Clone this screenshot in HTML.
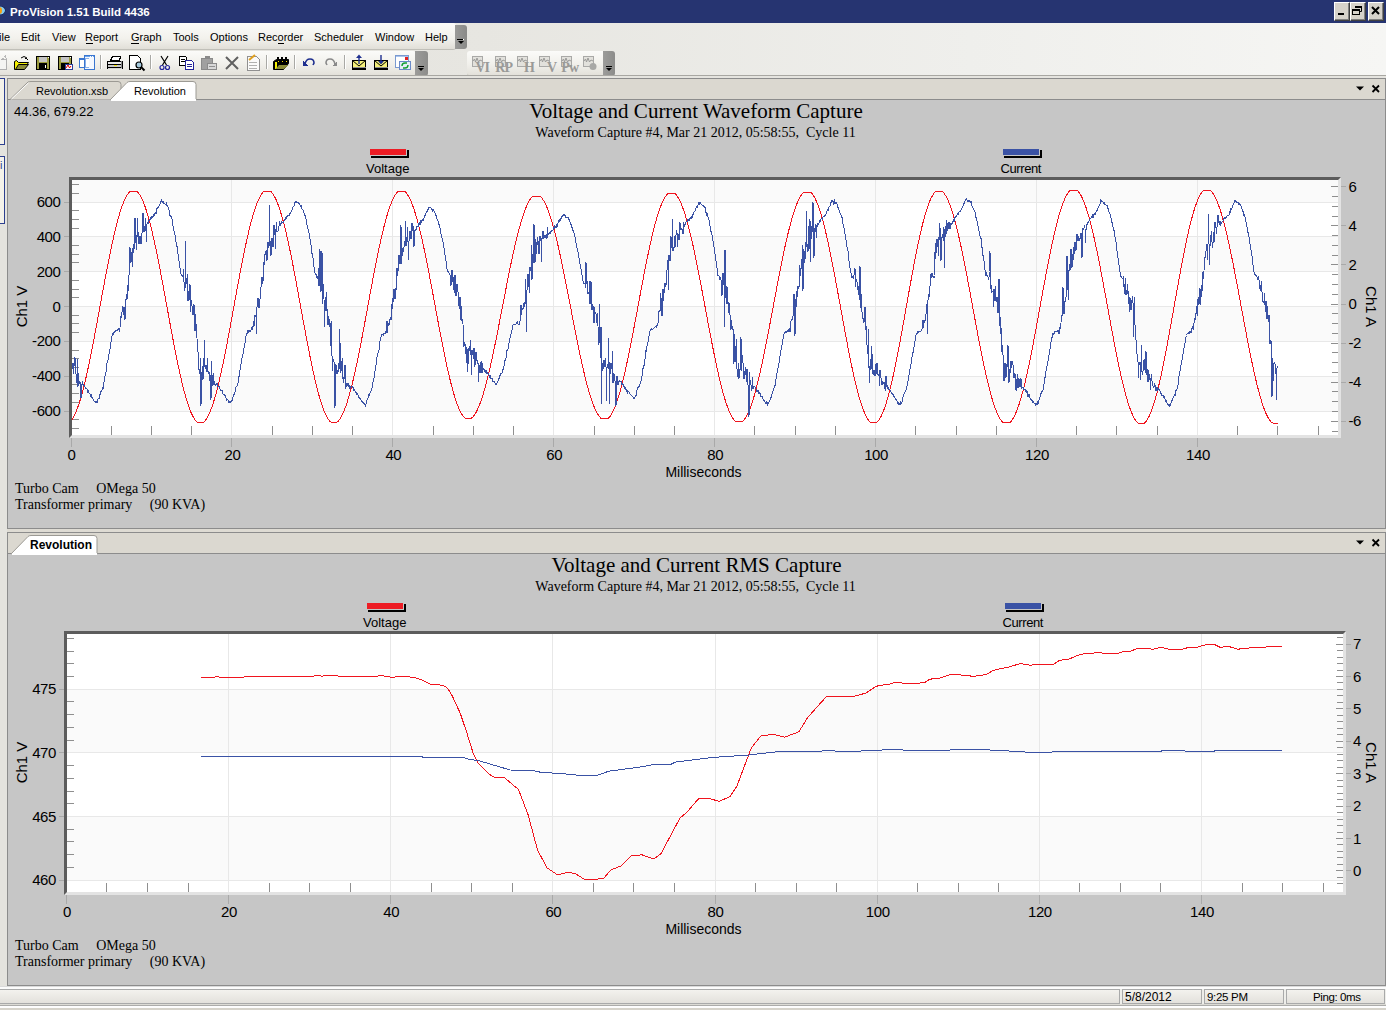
<!DOCTYPE html><html><head><meta charset="utf-8"><style>
*{margin:0;padding:0;box-sizing:border-box}
html,body{width:1386px;height:1010px;overflow:hidden;background:#e4e3de;font-family:'Liberation Sans',sans-serif;}
.abs{position:absolute}
.t{position:absolute;white-space:pre;line-height:1}
</style></head><body><div class="abs" style="left:0px;top:0px;width:1386px;height:23px;background:#263471"></div>
<svg class="abs" style="left:0;top:0" width="10" height="23"><ellipse cx="0" cy="10.5" rx="5.5" ry="4.6" fill="#0e1a50"/><ellipse cx="0" cy="10.5" rx="5" ry="4" fill="#86ccf0"/><ellipse cx="0" cy="10.5" rx="2" ry="3.2" fill="#f5a010"/></svg>
<div class="t" style="left:10px;top:6.5px;font-size:11.5px;font-weight:bold;color:#fff;">ProVision 1.51 Build 4436</div>
<div class="abs" style="left:1334px;top:2px;width:16px;height:19px;background:#d6d2ca;border-top:1px solid #fff;border-left:1px solid #fff;border-right:1px solid #404040;border-bottom:1px solid #404040;box-shadow:inset -1px -1px 0 #808080"></div>
<svg class="abs" style="left:1334px;top:2px" width="16" height="19"><rect x="4" y="11" width="6" height="2" fill="#000"/></svg>
<div class="abs" style="left:1350px;top:2px;width:16px;height:19px;background:#d6d2ca;border-top:1px solid #fff;border-left:1px solid #fff;border-right:1px solid #404040;border-bottom:1px solid #404040;box-shadow:inset -1px -1px 0 #808080"></div>
<svg class="abs" style="left:1350px;top:2px" width="16" height="19"><path d="M5.5 4.5 H11.5 V9.5 H9.5" fill="none" stroke="#000" stroke-width="1"/><rect x="5" y="4" width="7" height="2" fill="#000"/><rect x="2.5" y="7.5" width="7" height="5" fill="#d6d2ca" stroke="#000" stroke-width="1"/><rect x="2" y="7" width="8" height="2" fill="#000"/></svg>
<div class="abs" style="left:1368px;top:2px;width:16px;height:19px;background:#d6d2ca;border-top:1px solid #fff;border-left:1px solid #fff;border-right:1px solid #404040;border-bottom:1px solid #404040;box-shadow:inset -1px -1px 0 #808080"></div>
<svg class="abs" style="left:1368px;top:2px" width="16" height="19"><path d="M4 5 L11 12 M11 5 L4 12" stroke="#000" stroke-width="2"/></svg>
<div class="abs" style="left:0;top:23px;width:1386px;height:53px;background:linear-gradient(90deg,#e2e1db 0%,#e7e6e1 35%,#efefec 70%,#f6f6f4 100%)"></div>
<div class="abs" style="left:-4px;top:23px;width:460px;height:27px;background:linear-gradient(#fbfbf9,#f2f1ec 60%,#e1dfd8);border-radius:0 3px 3px 0;border-bottom:1px solid #c0bfb8"></div>
<div class="abs" style="left:455px;top:25px;width:12px;height:24px;background:linear-gradient(90deg,#9a9a98,#8a8a88);border-radius:0 3px 3px 0"></div>
<svg class="abs" style="left:455px;top:25px" width="12" height="24"><rect x="3" y="14" width="6" height="1" fill="#fff"/><path d="M3 16 L9 16 L6 19Z" fill="#000"/><rect x="2" y="14" width="6" height="1" fill="#000"/></svg>
<div class="t" style="left:-1px;top:32px;font-size:11px;color:#000">ile</div>
<div class="t" style="left:21px;top:32px;font-size:11px;color:#000">Edit</div>
<div class="t" style="left:52px;top:32px;font-size:11px;color:#000">View</div>
<div class="t" style="left:85px;top:32px;font-size:11px;color:#000">Report</div>
<div class="t" style="left:131px;top:32px;font-size:11px;color:#000">Graph</div>
<div class="t" style="left:173px;top:32px;font-size:11px;color:#000">Tools</div>
<div class="t" style="left:210px;top:32px;font-size:11px;color:#000">Options</div>
<div class="t" style="left:258px;top:32px;font-size:11px;color:#000">Recorder</div>
<div class="t" style="left:314px;top:32px;font-size:11px;color:#000">Scheduler</div>
<div class="t" style="left:375px;top:32px;font-size:11px;color:#000">Window</div>
<div class="t" style="left:425px;top:32px;font-size:11px;color:#000">Help</div>
<div class="abs" style="left:86px;top:43px;width:7px;height:1px;background:#000"></div>
<div class="abs" style="left:131px;top:43px;width:8px;height:1px;background:#000"></div>
<div class="abs" style="left:278px;top:43px;width:6px;height:1px;background:#000"></div>
<div class="abs" style="left:-4px;top:51px;width:420px;height:25px;background:linear-gradient(#fbfbf9,#f1f0eb 55%,#e3e1da);border-radius:0 3px 3px 0;border-bottom:1px solid #c4c3bc"></div>
<div class="abs" style="left:415px;top:51px;width:13px;height:25px;background:linear-gradient(90deg,#9c9c9a,#8c8c8a);border-radius:0 3px 3px 0"></div>
<svg class="abs" style="left:415px;top:51px" width="13" height="25"><rect x="3" y="15" width="6" height="1" fill="#000"/><path d="M3 17 L9 17 L6 20Z" fill="#000"/></svg>
<div class="abs" style="left:467px;top:51px;width:140px;height:25px;background:linear-gradient(#fbfbf9,#f1f0eb 55%,#e3e1da);border-radius:3px 0 0 3px;border-bottom:1px solid #c4c3bc"></div>
<div class="abs" style="left:603px;top:51px;width:12px;height:25px;background:linear-gradient(90deg,#9c9c9a,#8c8c8a);border-radius:0 3px 3px 0"></div>
<svg class="abs" style="left:603px;top:51px" width="12" height="25"><rect x="3" y="15" width="6" height="1" fill="#000"/><path d="M3 17 L9 17 L6 20Z" fill="#000"/></svg>
<svg class="abs" style="left:0;top:48px" width="620" height="28" shape-rendering="crispEdges">
<path d="M0.5 11.5 L6.5 11.5 L6.5 21.5 L0 21.5" fill="#f4f4f2" stroke="#b0b0b0" stroke-width="1"/>
<path d="M4 8 L7 11 M2 10 L6 12 M5 7 L6 10" stroke="#b8b8b8" stroke-width="1"/>
<path d="M14.5 13.5 L14.5 21.5 L23.5 21.5 L28.5 14.5 L18.5 14.5 L16.5 12.5Z" fill="#f5f000" stroke="#000" stroke-width="1" shape-rendering="auto"/>
<path d="M15.5 21.5 L18.5 16.5 L28.5 16.5 L24.5 21.5Z" fill="#8c8c3a" stroke="#000" stroke-width="1" shape-rendering="auto"/>
<path d="M21 10 Q24 7 27 10" fill="none" stroke="#000" stroke-width="1" shape-rendering="auto"/><path d="M26 9 L28 12 L25 11Z" fill="#000"/>
<rect x="36" y="8" width="14" height="14" fill="#000"/>
<rect x="37" y="9" width="12" height="12" fill="#9c9c40"/>
<rect x="39" y="9" width="8" height="5" fill="#c4c4c4"/>
<rect x="39" y="15" width="8" height="6" fill="#000"/>
<rect x="45" y="17" width="1" height="3" fill="#fff"/>
<rect x="48" y="9" width="1" height="1" fill="#fff"/>
<rect x="58" y="8" width="14" height="14" fill="#000"/>
<rect x="59" y="9" width="12" height="12" fill="#9c9c40"/>
<rect x="61" y="9" width="8" height="5" fill="#c4c4c4"/>
<rect x="61" y="15" width="8" height="6" fill="#000"/>
<rect x="70" y="9" width="1" height="1" fill="#fff"/>
<rect x="65" y="16" width="8" height="6" fill="#2a3f9a"/>
<rect x="66" y="17" width="6" height="4" fill="#fff"/>
<path d="M66 20 L68 17 L69.5 20 L71 18" stroke="#e00" stroke-width="1" fill="none" shape-rendering="auto"/>
<rect x="79" y="10" width="7" height="10" fill="#3a76d0"/>
<rect x="80" y="12" width="5" height="7" fill="#fff"/>
<rect x="84" y="7" width="11" height="15" fill="#3a76d0"/>
<rect x="85" y="9" width="9" height="12" fill="#f4f8ff"/>
<rect x="85" y="8" width="9" height="1" fill="#6aa4ec"/>
<rect x="92" y="8" width="1" height="1" fill="#fff"/>
<rect x="90" y="8" width="1" height="1" fill="#fff"/>
<rect x="85" y="10" width="4" height="10" fill="#8ab0e8"/>
<rect x="86" y="11" width="3" height="8" fill="#fff"/>
<rect x="100" y="7" width="1" height="14" fill="#a9a9a5"/>
<rect x="101" y="7" width="1" height="14" fill="#fff"/>
<path d="M110.5 12.5 L112.5 8.5 L120.5 8.5 L119.5 12.5Z" fill="#fff" stroke="#000"/>
<rect x="107" y="13" width="16" height="8" fill="#000"/>
<rect x="108" y="14" width="13" height="2" fill="#e8e8e8"/>
<rect x="108" y="17" width="13" height="2" fill="#c8c8c8"/>
<rect x="114" y="17" width="3" height="1" fill="#f0e000"/>
<rect x="108" y="20" width="14" height="1" fill="#d0d0d0"/>
<rect x="121" y="13" width="1" height="7" fill="#888"/>
<path d="M129.5 7.5 L137.5 7.5 L140.5 10.5 L140.5 21.5 L129.5 21.5Z" fill="#fff" stroke="#000"/>
<circle cx="139" cy="17" r="3" fill="#a8cce0" stroke="#000" stroke-width="1.2" shape-rendering="auto"/><path d="M141 19 L144.5 22.5" stroke="#000" stroke-width="2" shape-rendering="auto"/>
<rect x="150" y="7" width="1" height="14" fill="#a9a9a5"/>
<rect x="151" y="7" width="1" height="14" fill="#fff"/>
<path d="M161 8 L166.5 17 M168 8 L162.5 17" stroke="#000" stroke-width="1.2" shape-rendering="auto"/>
<circle cx="162" cy="19.5" r="2" fill="none" stroke="#22229a" stroke-width="1.2" shape-rendering="auto"/><circle cx="167.5" cy="19.5" r="2" fill="none" stroke="#22229a" stroke-width="1.2" shape-rendering="auto"/>
<path d="M179.5 8.5 L185.5 8.5 L186.5 9.5 L186.5 17.5 L179.5 17.5Z" fill="#fff" stroke="#000"/>
<rect x="181" y="11" width="4" height="1" fill="#000"/>
<rect x="181" y="13" width="4" height="1" fill="#000"/>
<path d="M185.5 12.5 L191.5 12.5 L193.5 14.5 L193.5 21.5 L185.5 21.5Z" fill="#fff" stroke="#22229a"/>
<rect x="187" y="16" width="5" height="1" fill="#22229a"/>
<rect x="187" y="18" width="5" height="1" fill="#22229a"/>
<path d="M201.5 10.5 L212.5 10.5 L212.5 21.5 L201.5 21.5Z" fill="#a0a0a0" stroke="#8a8a8a"/>
<rect x="205" y="8" width="5" height="3" fill="#8a8a8a"/>
<path d="M207.5 15.5 L216.5 15.5 L216.5 21.5 L207.5 21.5Z" fill="#d8d8d8" stroke="#8a8a8a"/>
<rect x="209" y="18" width="6" height="1" fill="#909090"/>
<path d="M226 9 L238 21 M238 9 L226 21" stroke="#606060" stroke-width="2" shape-rendering="auto"/>
<path d="M247.5 8.5 L256.5 8.5 L259.5 11.5 L259.5 22.5 L247.5 22.5Z" fill="#fafafa" stroke="#909090"/>
<rect x="249" y="14" width="8" height="1" fill="#b0b0b0"/>
<rect x="249" y="17" width="8" height="1" fill="#b0b0b0"/>
<rect x="249" y="20" width="8" height="1" fill="#b0b0b0"/>
<path d="M249 12 L255 7" stroke="#e0a020" stroke-width="2" shape-rendering="auto"/>
<rect x="266" y="7" width="1" height="14" fill="#a9a9a5"/>
<rect x="267" y="7" width="1" height="14" fill="#fff"/>
<path d="M273.5 13.5 L273.5 21.5 L283.5 21.5 L288.5 15.5 L288.5 11.5 L276.5 11.5Z" fill="#000" stroke="#000" shape-rendering="auto"/>
<path d="M274.5 13.5 L276.5 13.5 L276.5 20.5 L274.5 20.5Z" fill="#f5f000"/>
<path d="M275.5 21 L279 17 L288.5 17 L284 21Z" fill="#8c8c3a" shape-rendering="auto"/>
<rect x="277" y="9" width="2" height="3" fill="#000"/>
<rect x="281" y="9" width="2" height="3" fill="#000"/>
<rect x="285" y="9" width="2" height="3" fill="#000"/>
<rect x="278" y="13" width="1" height="1" fill="#ffe000"/>
<rect x="282" y="13" width="1" height="1" fill="#ffe000"/>
<rect x="286" y="13" width="1" height="1" fill="#ffe000"/>
<rect x="294" y="7" width="1" height="14" fill="#a9a9a5"/>
<rect x="295" y="7" width="1" height="14" fill="#fff"/>
<path d="M305 16 Q306 11 310 11 Q314 11 314 15 L313 17" fill="none" stroke="#1f2f8f" stroke-width="1.6" shape-rendering="auto"/><path d="M303 13 L303 18 L308 18Z" fill="#1f2f8f"/>
<path d="M335 16 Q334 11 330 11 Q326 11 326 15 L327 17" fill="none" stroke="#8a8a8a" stroke-width="1.6" shape-rendering="auto"/><path d="M337 13 L337 18 L332 18Z" fill="#8a8a8a"/>
<rect x="344" y="7" width="1" height="14" fill="#a9a9a5"/>
<rect x="345" y="7" width="1" height="14" fill="#fff"/>
<path d="M352.5 12.5 L365.5 12.5 L365.5 21.5 L352.5 21.5Z" fill="#f5f07a" stroke="#000"/>
<path d="M352.5 12.5 L359 18 L365.5 12.5" fill="none" stroke="#000" shape-rendering="auto"/>
<rect x="353" y="20" width="13" height="2" fill="#000"/>
<rect x="353" y="19" width="13" height="1" fill="#909090"/>
<path d="M359 16 L359 8" stroke="#1f2f8f" stroke-width="1.4" shape-rendering="auto"/><path d="M356 10 L359 6.5 L362 10Z" fill="#1f2f8f" shape-rendering="auto"/>
<path d="M374.5 12.5 L387.5 12.5 L387.5 21.5 L374.5 21.5Z" fill="#f5f07a" stroke="#000"/>
<path d="M374.5 12.5 L381 18 L387.5 12.5" fill="none" stroke="#000" shape-rendering="auto"/>
<rect x="375" y="20" width="13" height="2" fill="#000"/>
<rect x="375" y="19" width="13" height="1" fill="#909090"/>
<path d="M381 7 L381 15" stroke="#1f2f8f" stroke-width="1.4" shape-rendering="auto"/><path d="M378 13 L381 16.5 L384 13Z" fill="#1f2f8f" shape-rendering="auto"/>
<rect x="395" y="7" width="14" height="13" fill="#7a9ad0"/>
<rect x="396" y="9" width="12" height="10" fill="#fff"/>
<rect x="396" y="8" width="12" height="1" fill="#aac4ec"/>
<rect x="405" y="9" width="3" height="3" fill="#e02020"/>
<rect x="399" y="13" width="12" height="9" fill="#6a8ac8"/>
<rect x="400" y="14" width="10" height="7" fill="#e6eef8"/>
<path d="M402 18 Q402 15 405 15 L407 15 M408 17 Q408 20 405 20 L403 20" fill="none" stroke="#12a030" stroke-width="1.4" shape-rendering="auto"/>
<rect x="472" y="8" width="11" height="11" fill="#a9a9a7"/>
<rect x="473" y="9" width="9" height="9" fill="#e2e1dc"/>
<path d="M473 13 L474.5 11 L475.5 14 L477 10 L478.5 14 L480 12 L482 13" fill="none" stroke="#9a9a98" stroke-width="1" shape-rendering="auto"/>
<text x="489" y="23.5" text-anchor="end" font-family="Liberation Serif, serif" font-weight="bold" font-size="14" letter-spacing="-1" fill="#9a9a98" shape-rendering="auto">VI</text>
<rect x="495" y="8" width="11" height="11" fill="#a9a9a7"/>
<rect x="496" y="9" width="9" height="9" fill="#e2e1dc"/>
<path d="M496 13 L497.5 11 L498.5 14 L500 10 L501.5 14 L503 12 L505 13" fill="none" stroke="#9a9a98" stroke-width="1" shape-rendering="auto"/>
<text x="512" y="23.5" text-anchor="end" font-family="Liberation Serif, serif" font-weight="bold" font-size="14" letter-spacing="-1" fill="#9a9a98" shape-rendering="auto">RP</text>
<rect x="517" y="8" width="11" height="11" fill="#a9a9a7"/>
<rect x="518" y="9" width="9" height="9" fill="#e2e1dc"/>
<path d="M518 13 L519.5 11 L520.5 14 L522 10 L523.5 14 L525 12 L527 13" fill="none" stroke="#9a9a98" stroke-width="1" shape-rendering="auto"/>
<text x="534" y="23.5" text-anchor="end" font-family="Liberation Serif, serif" font-weight="bold" font-size="14" letter-spacing="-1" fill="#9a9a98" shape-rendering="auto">H</text>
<rect x="539" y="8" width="11" height="11" fill="#a9a9a7"/>
<rect x="540" y="9" width="9" height="9" fill="#e2e1dc"/>
<path d="M540 13 L541.5 11 L542.5 14 L544 10 L545.5 14 L547 12 L549 13" fill="none" stroke="#9a9a98" stroke-width="1" shape-rendering="auto"/>
<text x="556" y="23.5" text-anchor="end" font-family="Liberation Serif, serif" font-weight="bold" font-size="14" letter-spacing="-1" fill="#9a9a98" shape-rendering="auto">V</text>
<rect x="561" y="8" width="11" height="11" fill="#a9a9a7"/>
<rect x="562" y="9" width="9" height="9" fill="#e2e1dc"/>
<path d="M562 13 L563.5 11 L564.5 14 L566 10 L567.5 14 L569 12 L571 13" fill="none" stroke="#9a9a98" stroke-width="1" shape-rendering="auto"/>
<text x="578" y="23.5" text-anchor="end" font-family="Liberation Serif, serif" font-weight="bold" font-size="14" letter-spacing="-1" fill="#9a9a98" shape-rendering="auto">Pw</text>
<rect x="583" y="8" width="11" height="11" fill="#a9a9a7"/>
<rect x="584" y="9" width="9" height="9" fill="#e2e1dc"/>
<path d="M584 13 L585.5 11 L586.5 14 L588 10 L589.5 14 L591 12 L593 13" fill="none" stroke="#9a9a98" stroke-width="1" shape-rendering="auto"/>
<circle cx="593" cy="18.5" r="3.5" fill="#a8a8a6" shape-rendering="auto"/>
</svg>
<div class="abs" style="left:0px;top:75px;width:1386px;height:1px;background:#a8a7a2"></div>
<div class="abs" style="left:0px;top:76px;width:1386px;height:2px;background:#e5e4df"></div>
<div class="abs" style="left:0px;top:78px;width:7px;height:910px;background:#e4e3de"></div>
<div class="abs" style="left:-10px;top:78px;width:15px;height:67px;border:1px solid #2d3f8f;background:#f4f2ea"></div>
<div class="abs" style="left:-10px;top:156px;width:15px;height:68px;border:1px solid #2d3f8f;background:#f4f2ea"></div>
<div class="t" style="left:0px;top:160px;font-size:11px;color:#2d3f8f">i</div>
<div class="abs" style="left:7px;top:78px;width:1379px;height:451px;border:1px solid #8c8c8c;background:#c6c6c6"></div>
<div class="abs" style="left:8px;top:79px;width:1377px;height:21px;background:#dbd8d0;border-bottom:1px solid #8c8c8c"></div>
<svg class="abs" style="left:8px;top:79px" width="200" height="22"><path d="M2 20.5 L20 3 Q21 2.5 23 2.5 L110 2.5 Q113 2.5 113 5.5 L113 20.5" fill="#dbd8d0" stroke="#9c9a94" stroke-width="1"/><path d="M3.5 20 L20.5 3.8" stroke="#fff" stroke-width="1"/><path d="M102 21 L119 3.5 Q120 2.5 122 2.5 L185 2.5 Q188 2.5 188 5.5 L188 21" fill="#fff" stroke="#9c9a94" stroke-width="1"/><rect x="103" y="20" width="85" height="2" fill="#fff"/></svg>
<svg class="abs" style="left:1354px;top:84px" width="30" height="12"><path d="M2 2.5 L10 2.5 L6 6.5Z" fill="#000"/><path d="M18.5 1.5 L25 8 M25 1.5 L18.5 8" stroke="#000" stroke-width="1.8"/></svg>
<div class="t" style="left:36px;top:86px;font-size:11px;color:#000">Revolution.xsb</div>
<div class="t" style="left:134px;top:86px;font-size:11px;color:#000">Revolution</div>
<div class="abs" style="left:7px;top:529px;width:1379px;height:3px;background:#dedbd3"></div>
<div class="abs" style="left:7px;top:532px;width:1379px;height:454px;border:1px solid #8c8c8c;background:#c6c6c6"></div>
<div class="abs" style="left:8px;top:533px;width:1377px;height:21px;background:#dbd8d0;border-bottom:1px solid #8c8c8c"></div>
<svg class="abs" style="left:8px;top:533px" width="200" height="22"><path d="M3 21 L20 3.5 Q21 2.5 23 2.5 L86 2.5 Q89 2.5 89 5.5 L89 21" fill="#fff" stroke="#9c9a94" stroke-width="1"/><rect x="4" y="20" width="85" height="2" fill="#fff"/></svg>
<svg class="abs" style="left:1354px;top:538px" width="30" height="12"><path d="M2 2.5 L10 2.5 L6 6.5Z" fill="#000"/><path d="M18.5 1.5 L25 8 M25 1.5 L18.5 8" stroke="#000" stroke-width="1.8"/></svg>
<div class="t" style="left:30px;top:539px;font-size:12px;font-weight:bold;color:#000">Revolution</div>
<div class="abs" style="left:0px;top:986px;width:1386px;height:24px;background:#eeeeea"></div>
<div class="abs" style="left:0px;top:986px;width:1386px;height:1px;background:#dadada"></div>
<div class="abs" style="left:0px;top:987px;width:1386px;height:2px;background:#fcfcfc"></div>
<div class="abs" style="left:0px;top:1004px;width:1386px;height:1px;background:#dcdbd5"></div>
<div class="abs" style="left:0px;top:1005px;width:1386px;height:1px;background:#acacaa"></div>
<div class="abs" style="left:0px;top:1006px;width:1386px;height:2px;background:#fdfdfd"></div>
<div class="abs" style="left:0px;top:1008px;width:1386px;height:2px;background:#d6d3ca"></div>
<div class="abs" style="left:-2px;top:989px;width:1122px;height:15px;border:1px solid #a9aaaa;background:linear-gradient(#f3f2ee,#e3e1dc)"></div>
<div class="abs" style="left:1122px;top:989px;width:80px;height:15px;border:1px solid #a9aaaa;background:linear-gradient(#f3f2ee,#e3e1dc)"></div>
<div class="abs" style="left:1204px;top:989px;width:80px;height:15px;border:1px solid #a9aaaa;background:linear-gradient(#f3f2ee,#e3e1dc)"></div>
<div class="abs" style="left:1286px;top:989px;width:99px;height:15px;border:1px solid #a9aaaa;background:linear-gradient(#f3f2ee,#e3e1dc)"></div>
<div class="t" style="left:1125px;top:991px;font-size:12px;color:#000">5/8/2012</div>
<div class="t" style="left:1207px;top:991.5px;font-size:11.5px;color:#000;letter-spacing:-0.3px">9:25 PM</div>
<div class="t" style="left:1313px;top:991.5px;font-size:11.5px;color:#000;letter-spacing:-0.4px">Ping: 0ms</div>
<svg class="abs" style="left:0;top:0;overflow:visible" width="1386" height="1010">
<text x="14" y="116" font-family="'Liberation Sans', sans-serif" font-size="13" text-anchor="start" >44.36, 679.22</text>
<text x="696" y="118" font-family="'Liberation Serif', serif" font-size="21" text-anchor="middle" >Voltage and Current Waveform Capture</text>
<text x="695.5" y="137" font-family="'Liberation Serif', serif" font-size="14" text-anchor="middle" >Waveform Capture #4, Mar 21 2012, 05:58:55,&#160; Cycle 11</text>
<rect x="371" y="156" width="37" height="2" fill="#000"/>
<rect x="407" y="150" width="2" height="8" fill="#000"/>
<rect x="370" y="149" width="36" height="6" fill="#ed1c24"/>
<text x="366" y="173" font-family="'Liberation Sans', sans-serif" font-size="13" text-anchor="start" >Voltage</text>
<rect x="1004" y="156" width="37" height="2" fill="#000"/>
<rect x="1040" y="150" width="2" height="8" fill="#000"/>
<rect x="1003" y="149" width="36" height="6" fill="#3a52a5"/>
<text x="1000.5" y="173" font-family="'Liberation Sans', sans-serif" font-size="13" text-anchor="start" letter-spacing="-0.4">Current</text>
<text x="15" y="493" font-family="'Liberation Serif', serif" font-size="14" text-anchor="start" >Turbo Cam&#160;&#160;&#160;&#160; OMega 50</text>
<text x="15" y="509" font-family="'Liberation Serif', serif" font-size="14" text-anchor="start" >Transformer primary&#160;&#160;&#160;&#160; (90 KVA)</text>
<rect x="72" y="180" width="1266" height="255" fill="#ffffff"/>
<rect x="72" y="180" width="1266" height="22" fill="#fafafa"/>
<rect x="72" y="237" width="1266" height="35" fill="#fafafa"/>
<rect x="72" y="306" width="1266" height="35" fill="#fafafa"/>
<rect x="72" y="376" width="1266" height="35" fill="#fafafa"/>
<rect x="231" y="180" width="1" height="255" fill="#e8e8e8"/>
<rect x="392" y="180" width="1" height="255" fill="#e8e8e8"/>
<rect x="553" y="180" width="1" height="255" fill="#e8e8e8"/>
<rect x="714" y="180" width="1" height="255" fill="#e8e8e8"/>
<rect x="875" y="180" width="1" height="255" fill="#e8e8e8"/>
<rect x="1036" y="180" width="1" height="255" fill="#e8e8e8"/>
<rect x="1197" y="180" width="1" height="255" fill="#e8e8e8"/>
<rect x="72" y="202" width="1266" height="1" fill="#e8e8e8"/>
<rect x="72" y="236" width="1266" height="1" fill="#e8e8e8"/>
<rect x="72" y="271" width="1266" height="1" fill="#e8e8e8"/>
<rect x="72" y="306" width="1266" height="1" fill="#e8e8e8"/>
<rect x="72" y="341" width="1266" height="1" fill="#e8e8e8"/>
<rect x="72" y="376" width="1266" height="1" fill="#e8e8e8"/>
<rect x="72" y="411" width="1266" height="1" fill="#e8e8e8"/>
<rect x="72" y="428" width="7" height="1" fill="#8f8f8f"/>
<rect x="72" y="419" width="7" height="1" fill="#8f8f8f"/>
<rect x="72" y="402" width="7" height="1" fill="#8f8f8f"/>
<rect x="72" y="393" width="7" height="1" fill="#8f8f8f"/>
<rect x="72" y="384" width="7" height="1" fill="#8f8f8f"/>
<rect x="72" y="367" width="7" height="1" fill="#8f8f8f"/>
<rect x="72" y="358" width="7" height="1" fill="#8f8f8f"/>
<rect x="72" y="350" width="7" height="1" fill="#8f8f8f"/>
<rect x="72" y="332" width="7" height="1" fill="#8f8f8f"/>
<rect x="72" y="323" width="7" height="1" fill="#8f8f8f"/>
<rect x="72" y="315" width="7" height="1" fill="#8f8f8f"/>
<rect x="72" y="297" width="7" height="1" fill="#8f8f8f"/>
<rect x="72" y="289" width="7" height="1" fill="#8f8f8f"/>
<rect x="72" y="280" width="7" height="1" fill="#8f8f8f"/>
<rect x="72" y="262" width="7" height="1" fill="#8f8f8f"/>
<rect x="72" y="254" width="7" height="1" fill="#8f8f8f"/>
<rect x="72" y="245" width="7" height="1" fill="#8f8f8f"/>
<rect x="72" y="228" width="7" height="1" fill="#8f8f8f"/>
<rect x="72" y="219" width="7" height="1" fill="#8f8f8f"/>
<rect x="72" y="210" width="7" height="1" fill="#8f8f8f"/>
<rect x="72" y="193" width="7" height="1" fill="#8f8f8f"/>
<rect x="72" y="184" width="7" height="1" fill="#8f8f8f"/>
<rect x="111" y="426" width="1" height="9" fill="#8f8f8f"/>
<rect x="151" y="426" width="1" height="9" fill="#8f8f8f"/>
<rect x="191" y="426" width="1" height="9" fill="#8f8f8f"/>
<rect x="272" y="426" width="1" height="9" fill="#8f8f8f"/>
<rect x="312" y="426" width="1" height="9" fill="#8f8f8f"/>
<rect x="352" y="426" width="1" height="9" fill="#8f8f8f"/>
<rect x="433" y="426" width="1" height="9" fill="#8f8f8f"/>
<rect x="473" y="426" width="1" height="9" fill="#8f8f8f"/>
<rect x="513" y="426" width="1" height="9" fill="#8f8f8f"/>
<rect x="594" y="426" width="1" height="9" fill="#8f8f8f"/>
<rect x="634" y="426" width="1" height="9" fill="#8f8f8f"/>
<rect x="674" y="426" width="1" height="9" fill="#8f8f8f"/>
<rect x="754" y="426" width="1" height="9" fill="#8f8f8f"/>
<rect x="795" y="426" width="1" height="9" fill="#8f8f8f"/>
<rect x="835" y="426" width="1" height="9" fill="#8f8f8f"/>
<rect x="915" y="426" width="1" height="9" fill="#8f8f8f"/>
<rect x="956" y="426" width="1" height="9" fill="#8f8f8f"/>
<rect x="996" y="426" width="1" height="9" fill="#8f8f8f"/>
<rect x="1076" y="426" width="1" height="9" fill="#8f8f8f"/>
<rect x="1116" y="426" width="1" height="9" fill="#8f8f8f"/>
<rect x="1157" y="426" width="1" height="9" fill="#8f8f8f"/>
<rect x="1237" y="426" width="1" height="9" fill="#8f8f8f"/>
<rect x="1277" y="426" width="1" height="9" fill="#8f8f8f"/>
<rect x="1318" y="426" width="1" height="9" fill="#8f8f8f"/>
<rect x="1332" y="431" width="6" height="1" fill="#8f8f8f"/>
<rect x="1331" y="421" width="7" height="1" fill="#8f8f8f"/>
<rect x="1332" y="411" width="6" height="1" fill="#8f8f8f"/>
<rect x="1332" y="401" width="6" height="1" fill="#8f8f8f"/>
<rect x="1332" y="391" width="6" height="1" fill="#8f8f8f"/>
<rect x="1331" y="382" width="7" height="1" fill="#8f8f8f"/>
<rect x="1332" y="372" width="6" height="1" fill="#8f8f8f"/>
<rect x="1332" y="362" width="6" height="1" fill="#8f8f8f"/>
<rect x="1332" y="352" width="6" height="1" fill="#8f8f8f"/>
<rect x="1331" y="343" width="7" height="1" fill="#8f8f8f"/>
<rect x="1332" y="333" width="6" height="1" fill="#8f8f8f"/>
<rect x="1332" y="323" width="6" height="1" fill="#8f8f8f"/>
<rect x="1332" y="313" width="6" height="1" fill="#8f8f8f"/>
<rect x="1331" y="304" width="7" height="1" fill="#8f8f8f"/>
<rect x="1332" y="294" width="6" height="1" fill="#8f8f8f"/>
<rect x="1332" y="284" width="6" height="1" fill="#8f8f8f"/>
<rect x="1332" y="274" width="6" height="1" fill="#8f8f8f"/>
<rect x="1331" y="264" width="7" height="1" fill="#8f8f8f"/>
<rect x="1332" y="255" width="6" height="1" fill="#8f8f8f"/>
<rect x="1332" y="245" width="6" height="1" fill="#8f8f8f"/>
<rect x="1332" y="235" width="6" height="1" fill="#8f8f8f"/>
<rect x="1331" y="225" width="7" height="1" fill="#8f8f8f"/>
<rect x="1332" y="216" width="6" height="1" fill="#8f8f8f"/>
<rect x="1332" y="206" width="6" height="1" fill="#8f8f8f"/>
<rect x="1332" y="196" width="6" height="1" fill="#8f8f8f"/>
<rect x="1331" y="186" width="7" height="1" fill="#8f8f8f"/>
<path d="M72 419.39 L72.5 418.66 L73 417.86 L73.5 416.99 L74 416.07 L74.5 415.09 L75 414.05 L75.5 412.95 L76 411.79 L76.5 410.57 L77 409.3 L77.5 407.97 L78 406.59 L78.5 405.15 L79 403.65 L79.5 402.11 L80 400.51 L80.5 398.86 L81 397.16 L81.5 395.41 L82 393.61 L82.5 391.76 L83 389.87 L83.5 387.93 L84 385.94 L84.5 383.92 L85 381.85 L85.5 379.74 L86 377.59 L86.5 375.4 L87 373.17 L87.5 370.91 L88 368.61 L88.5 366.27 L89 363.91 L89.5 361.51 L90 359.09 L90.5 356.63 L91 354.15 L91.5 351.64 L92 349.1 L92.5 346.55 L93 343.97 L93.5 341.37 L94 338.75 L94.5 336.11 L95 333.46 L95.5 330.8 L96 328.12 L96.5 325.42 L97 322.72 L97.5 320.01 L98 317.29 L98.5 314.57 L99 311.84 L99.5 309.11 L100 306.38 L100.5 303.64 L101 300.91 L101.5 298.19 L102 295.46 L102.5 292.75 L103 290.04 L103.5 287.34 L104 284.65 L104.5 281.97 L105 279.31 L105.5 276.66 L106 274.02 L106.5 271.41 L107 268.81 L107.5 266.24 L108 263.69 L108.5 261.16 L109 258.65 L109.5 256.18 L110 253.73 L110.5 251.31 L111 248.92 L111.5 246.56 L112 244.23 L112.5 241.94 L113 239.68 L113.5 237.46 L114 235.28 L114.5 233.14 L115 231.03 L115.5 228.97 L116 226.96 L116.5 224.98 L117 223.05 L117.5 221.17 L118 219.33 L118.5 217.54 L119 215.8 L119.5 214.11 L120 212.47 L120.5 210.88 L121 209.34 L121.5 207.86 L122 206.43 L122.5 205.06 L123 203.74 L123.5 202.48 L124 201.27 L124.5 200.13 L125 199.04 L125.5 198.01 L126 197.04 L126.5 196.13 L127 195.28 L127.5 194.49 L128 193.76 L128.5 193.1 L129 192.5 L129.5 191.96 L130 191.48 L130.5 191.3 L131 191.3 L131.5 191.3 L132 191.3 L132.5 191.3 L133 191.3 L133.5 191.3 L134 191.3 L134.5 191.3 L135 191.3 L135.5 191.3 L136 191.3 L136.5 191.3 L137 191.49 L137.5 191.97 L138 192.51 L138.5 193.12 L139 193.79 L139.5 194.52 L140 195.32 L140.5 196.17 L141 197.09 L141.5 198.06 L142 199.1 L142.5 200.19 L143 201.35 L143.5 202.56 L144 203.83 L144.5 205.16 L145 206.54 L145.5 207.98 L146 209.47 L146.5 211.02 L147 212.62 L147.5 214.27 L148 215.97 L148.5 217.72 L149 219.52 L149.5 221.37 L150 223.27 L150.5 225.21 L151 227.2 L151.5 229.23 L152 231.3 L152.5 233.42 L153 235.57 L153.5 237.77 L154 240 L154.5 242.27 L155 244.57 L155.5 246.91 L156 249.29 L156.5 251.69 L157 254.12 L157.5 256.59 L158 259.08 L158.5 261.6 L159 264.14 L159.5 266.7 L160 269.29 L160.5 271.9 L161 274.53 L161.5 277.17 L162 279.84 L162.5 282.51 L163 285.2 L163.5 287.9 L164 290.62 L164.5 293.34 L165 296.07 L165.5 298.8 L166 301.54 L166.5 304.28 L167 307.02 L167.5 309.77 L168 312.51 L168.5 315.25 L169 317.98 L169.5 320.71 L170 323.43 L170.5 326.14 L171 328.84 L171.5 331.52 L172 334.2 L172.5 336.86 L173 339.5 L173.5 342.12 L174 344.73 L174.5 347.31 L175 349.87 L175.5 352.41 L176 354.92 L176.5 357.41 L177 359.87 L177.5 362.29 L178 364.69 L178.5 367.06 L179 369.39 L179.5 371.69 L180 373.95 L180.5 376.18 L181 378.36 L181.5 380.51 L182 382.62 L182.5 384.68 L183 386.71 L183.5 388.68 L184 390.62 L184.5 392.5 L185 394.34 L185.5 396.13 L186 397.88 L186.5 399.57 L187 401.21 L187.5 402.8 L188 404.33 L188.5 405.81 L189 407.24 L189.5 408.61 L190 409.93 L190.5 411.19 L191 412.39 L191.5 413.53 L192 414.61 L192.5 415.64 L193 416.6 L193.5 417.51 L194 418.35 L194.5 419.13 L195 419.85 L195.5 420.51 L196 421.1 L196.5 421.63 L197 422.1 L197.5 422.2 L198 422.2 L198.5 422.2 L199 422.2 L199.5 422.2 L200 422.2 L200.5 422.2 L201 422.2 L201.5 422.2 L202 422.2 L202.5 422.2 L203 422.2 L203.5 422.2 L204 421.92 L204.5 421.43 L205 420.87 L205.5 420.25 L206 419.57 L206.5 418.82 L207 418.02 L207.5 417.15 L208 416.22 L208.5 415.23 L209 414.19 L209.5 413.08 L210 411.91 L210.5 410.69 L211 409.41 L211.5 408.07 L212 406.68 L212.5 405.23 L213 403.72 L213.5 402.17 L214 400.56 L214.5 398.9 L215 397.18 L215.5 395.42 L216 393.61 L216.5 391.75 L217 389.85 L217.5 387.9 L218 385.9 L218.5 383.86 L219 381.78 L219.5 379.66 L220 377.49 L220.5 375.29 L221 373.05 L221.5 370.77 L222 368.46 L222.5 366.12 L223 363.74 L223.5 361.33 L224 358.89 L224.5 356.42 L225 353.92 L225.5 351.4 L226 348.85 L226.5 346.28 L227 343.69 L227.5 341.08 L228 338.44 L228.5 335.8 L229 333.13 L229.5 330.45 L230 327.76 L230.5 325.05 L231 322.34 L231.5 319.62 L232 316.89 L232.5 314.15 L233 311.41 L233.5 308.67 L234 305.93 L234.5 303.18 L235 300.44 L235.5 297.71 L236 294.97 L236.5 292.25 L237 289.53 L237.5 286.82 L238 284.12 L238.5 281.44 L239 278.77 L239.5 276.11 L240 273.47 L240.5 270.85 L241 268.25 L241.5 265.67 L242 263.12 L242.5 260.59 L243 258.08 L243.5 255.6 L244 253.15 L244.5 250.72 L245 248.33 L245.5 245.97 L246 243.65 L246.5 241.36 L247 239.1 L247.5 236.88 L248 234.7 L248.5 232.56 L249 230.47 L249.5 228.41 L250 226.4 L250.5 224.43 L251 222.5 L251.5 220.63 L252 218.8 L252.5 217.01 L253 215.28 L253.5 213.6 L254 211.97 L254.5 210.39 L255 208.87 L255.5 207.4 L256 205.98 L256.5 204.62 L257 203.32 L257.5 202.07 L258 200.88 L258.5 199.75 L259 198.68 L259.5 197.66 L260 196.71 L260.5 195.82 L261 194.99 L261.5 194.22 L262 193.51 L262.5 192.87 L263 192.29 L263.5 191.77 L264 191.31 L264.5 191.3 L265 191.3 L265.5 191.3 L266 191.3 L266.5 191.3 L267 191.3 L267.5 191.3 L268 191.3 L268.5 191.3 L269 191.3 L269.5 191.3 L270 191.3 L270.5 191.3 L271 191.68 L271.5 192.19 L272 192.76 L272.5 193.4 L273 194.1 L273.5 194.86 L274 195.68 L274.5 196.56 L275 197.51 L275.5 198.51 L276 199.58 L276.5 200.7 L277 201.89 L277.5 203.13 L278 204.43 L278.5 205.79 L279 207.2 L279.5 208.66 L280 210.18 L280.5 211.76 L281 213.39 L281.5 215.07 L282 216.8 L282.5 218.58 L283 220.4 L283.5 222.28 L284 224.2 L284.5 226.17 L285 228.19 L285.5 230.24 L286 232.34 L286.5 234.48 L287 236.66 L287.5 238.88 L288 241.14 L288.5 243.43 L289 245.76 L289.5 248.12 L290 250.52 L290.5 252.94 L291 255.4 L291.5 257.88 L292 260.4 L292.5 262.93 L293 265.49 L293.5 268.08 L294 270.68 L294.5 273.31 L295 275.95 L295.5 278.61 L296 281.29 L296.5 283.98 L297 286.68 L297.5 289.39 L298 292.12 L298.5 294.85 L299 297.59 L299.5 300.33 L300 303.08 L300.5 305.83 L301 308.57 L301.5 311.32 L302 314.07 L302.5 316.81 L303 319.54 L303.5 322.27 L304 324.99 L304.5 327.7 L305 330.4 L305.5 333.09 L306 335.76 L306.5 338.41 L307 341.05 L307.5 343.66 L308 346.26 L308.5 348.83 L309 351.39 L309.5 353.91 L310 356.41 L310.5 358.89 L311 361.33 L311.5 363.74 L312 366.12 L312.5 368.47 L313 370.79 L313.5 373.07 L314 375.31 L314.5 377.51 L315 379.68 L315.5 381.8 L316 383.88 L316.5 385.92 L317 387.92 L317.5 389.87 L318 391.78 L318.5 393.63 L319 395.44 L319.5 397.2 L320 398.91 L320.5 400.57 L321 402.18 L321.5 403.73 L322 405.23 L322.5 406.67 L323 408.06 L323.5 409.4 L324 410.67 L324.5 411.89 L325 413.05 L325.5 414.15 L326 415.19 L326.5 416.18 L327 417.1 L327.5 417.96 L328 418.75 L328.5 419.49 L329 420.16 L329.5 420.77 L330 421.32 L330.5 421.8 L331 422 L331.5 422 L332 422 L332.5 422 L333 422 L333.5 422 L334 422 L334.5 422 L335 422 L335.5 422 L336 422 L336.5 422 L337 422 L337.5 421.84 L338 421.37 L338.5 420.83 L339 420.24 L339.5 419.58 L340 418.86 L340.5 418.08 L341 417.25 L341.5 416.35 L342 415.39 L342.5 414.37 L343 413.3 L343.5 412.16 L344 410.97 L344.5 409.73 L345 408.42 L345.5 407.07 L346 405.65 L346.5 404.19 L347 402.67 L347.5 401.1 L348 399.48 L348.5 397.81 L349 396.08 L349.5 394.32 L350 392.5 L350.5 390.64 L351 388.73 L351.5 386.77 L352 384.78 L352.5 382.74 L353 380.66 L353.5 378.54 L354 376.38 L354.5 374.18 L355 371.95 L355.5 369.68 L356 367.38 L356.5 365.04 L357 362.67 L357.5 360.28 L358 357.85 L358.5 355.4 L359 352.92 L359.5 350.41 L360 347.88 L360.5 345.33 L361 342.76 L361.5 340.17 L362 337.56 L362.5 334.93 L363 332.29 L363.5 329.63 L364 326.96 L364.5 324.28 L365 321.59 L365.5 318.9 L366 316.19 L366.5 313.48 L367 310.77 L367.5 308.06 L368 305.34 L368.5 302.63 L369 299.92 L369.5 297.21 L370 294.5 L370.5 291.81 L371 289.12 L371.5 286.44 L372 283.77 L372.5 281.11 L373 278.47 L373.5 275.84 L374 273.23 L374.5 270.64 L375 268.07 L375.5 265.52 L376 262.99 L376.5 260.48 L377 258 L377.5 255.55 L378 253.12 L378.5 250.73 L379 248.36 L379.5 246.02 L380 243.72 L380.5 241.45 L381 239.22 L381.5 237.02 L382 234.86 L382.5 232.74 L383 230.66 L383.5 228.62 L384 226.63 L384.5 224.67 L385 222.76 L385.5 220.9 L386 219.08 L386.5 217.32 L387 215.59 L387.5 213.92 L388 212.3 L388.5 210.73 L389 209.21 L389.5 207.75 L390 206.33 L390.5 204.98 L391 203.67 L391.5 202.43 L392 201.24 L392.5 200.1 L393 199.03 L393.5 198.01 L394 197.05 L394.5 196.15 L395 195.32 L395.5 194.54 L396 193.82 L396.5 193.16 L397 192.57 L397.5 192.03 L398 191.56 L398.5 191.4 L399 191.4 L399.5 191.4 L400 191.4 L400.5 191.4 L401 191.4 L401.5 191.4 L402 191.4 L402.5 191.4 L403 191.4 L403.5 191.4 L404 191.4 L404.5 191.4 L405 191.59 L405.5 192.06 L406 192.6 L406.5 193.2 L407 193.86 L407.5 194.58 L408 195.36 L408.5 196.2 L409 197.1 L409.5 198.06 L410 199.08 L410.5 200.16 L411 201.3 L411.5 202.49 L412 203.74 L412.5 205.05 L413 206.41 L413.5 207.83 L414 209.3 L414.5 210.82 L415 212.39 L415.5 214.02 L416 215.69 L416.5 217.42 L417 219.19 L417.5 221.01 L418 222.88 L418.5 224.79 L419 226.75 L419.5 228.75 L420 230.79 L420.5 232.87 L421 234.99 L421.5 237.15 L422 239.35 L422.5 241.58 L423 243.85 L423.5 246.15 L424 248.49 L424.5 250.85 L425 253.25 L425.5 255.67 L426 258.13 L426.5 260.6 L427 263.1 L427.5 265.63 L428 268.18 L428.5 270.74 L429 273.33 L429.5 275.93 L430 278.55 L430.5 281.18 L431 283.83 L431.5 286.49 L432 289.15 L432.5 291.83 L433 294.51 L433.5 297.2 L434 299.9 L434.5 302.59 L435 305.29 L435.5 307.99 L436 310.68 L436.5 313.37 L437 316.06 L437.5 318.74 L438 321.41 L438.5 324.08 L439 326.73 L439.5 329.37 L440 332 L440.5 334.61 L441 337.21 L441.5 339.79 L442 342.35 L442.5 344.88 L443 347.4 L443.5 349.89 L444 352.36 L444.5 354.8 L445 357.21 L445.5 359.6 L446 361.95 L446.5 364.27 L447 366.56 L447.5 368.82 L448 371.04 L448.5 373.22 L449 375.36 L449.5 377.47 L450 379.54 L450.5 381.56 L451 383.54 L451.5 385.48 L452 387.37 L452.5 389.22 L453 391.02 L453.5 392.78 L454 394.48 L454.5 396.14 L455 397.74 L455.5 399.3 L456 400.8 L456.5 402.25 L457 403.64 L457.5 404.98 L458 406.26 L458.5 407.49 L459 408.66 L459.5 409.78 L460 410.83 L460.5 411.83 L461 412.77 L461.5 413.64 L462 414.46 L462.5 415.22 L463 415.92 L463.5 416.55 L464 417.12 L464.5 417.63 L465 418.08 L465.5 418.1 L466 418.1 L466.5 418.1 L467 418.1 L467.5 418.1 L468 418.1 L468.5 418.1 L469 418.1 L469.5 418.1 L470 418.1 L470.5 418.1 L471 418.1 L471.5 418.1 L472 417.8 L472.5 417.34 L473 416.81 L473.5 416.22 L474 415.58 L474.5 414.88 L475 414.12 L475.5 413.31 L476 412.44 L476.5 411.51 L477 410.53 L477.5 409.49 L478 408.4 L478.5 407.25 L479 406.06 L479.5 404.8 L480 403.5 L480.5 402.15 L481 400.74 L481.5 399.29 L482 397.79 L482.5 396.24 L483 394.64 L483.5 392.99 L484 391.3 L484.5 389.57 L485 387.79 L485.5 385.97 L486 384.1 L486.5 382.2 L487 380.25 L487.5 378.27 L488 376.25 L488.5 374.19 L489 372.1 L489.5 369.97 L490 367.81 L490.5 365.62 L491 363.39 L491.5 361.14 L492 358.85 L492.5 356.54 L493 354.21 L493.5 351.84 L494 349.46 L494.5 347.05 L495 344.62 L495.5 342.17 L496 339.7 L496.5 337.22 L497 334.72 L497.5 332.2 L498 329.67 L498.5 327.13 L499 324.58 L499.5 322.02 L500 319.45 L500.5 316.87 L501 314.29 L501.5 311.71 L502 309.12 L502.5 306.53 L503 303.94 L503.5 301.36 L504 298.77 L504.5 296.2 L505 293.62 L505.5 291.06 L506 288.5 L506.5 285.95 L507 283.41 L507.5 280.89 L508 278.38 L508.5 275.89 L509 273.41 L509.5 270.95 L510 268.5 L510.5 266.08 L511 263.68 L511.5 261.31 L512 258.96 L512.5 256.63 L513 254.33 L513.5 252.06 L514 249.82 L514.5 247.6 L515 245.42 L515.5 243.27 L516 241.16 L516.5 239.08 L517 237.04 L517.5 235.03 L518 233.06 L518.5 231.14 L519 229.25 L519.5 227.4 L520 225.6 L520.5 223.83 L521 222.12 L521.5 220.44 L522 218.82 L522.5 217.24 L523 215.71 L523.5 214.22 L524 212.79 L524.5 211.4 L525 210.07 L525.5 208.79 L526 207.56 L526.5 206.38 L527 205.26 L527.5 204.19 L528 203.17 L528.5 202.21 L529 201.31 L529.5 200.46 L530 199.67 L530.5 198.93 L531 198.25 L531.5 197.64 L532 197.07 L532.5 196.57 L533 196.12 L533.5 196 L534 196 L534.5 196 L535 196 L535.5 196 L536 196 L536.5 196 L537 196 L537.5 196 L538 196 L538.5 196 L539 196 L539.5 196 L540 196.13 L540.5 196.57 L541 197.08 L541.5 197.64 L542 198.26 L542.5 198.94 L543 199.68 L543.5 200.47 L544 201.32 L544.5 202.23 L545 203.19 L545.5 204.21 L546 205.28 L546.5 206.4 L547 207.58 L547.5 208.82 L548 210.1 L548.5 211.44 L549 212.83 L549.5 214.26 L550 215.75 L550.5 217.29 L551 218.87 L551.5 220.5 L552 222.18 L552.5 223.9 L553 225.66 L553.5 227.47 L554 229.32 L554.5 231.22 L555 233.15 L555.5 235.12 L556 237.13 L556.5 239.18 L557 241.26 L557.5 243.38 L558 245.53 L558.5 247.72 L559 249.94 L559.5 252.18 L560 254.46 L560.5 256.77 L561 259.1 L561.5 261.46 L562 263.84 L562.5 266.24 L563 268.67 L563.5 271.11 L564 273.58 L564.5 276.07 L565 278.57 L565.5 281.08 L566 283.61 L566.5 286.15 L567 288.71 L567.5 291.27 L568 293.84 L568.5 296.42 L569 299.01 L569.5 301.6 L570 304.19 L570.5 306.78 L571 309.38 L571.5 311.97 L572 314.56 L572.5 317.15 L573 319.73 L573.5 322.3 L574 324.87 L574.5 327.43 L575 329.97 L575.5 332.51 L576 335.03 L576.5 337.54 L577 340.03 L577.5 342.5 L578 344.96 L578.5 347.39 L579 349.8 L579.5 352.19 L580 354.56 L580.5 356.9 L581 359.22 L581.5 361.51 L582 363.77 L582.5 366 L583 368.2 L583.5 370.36 L584 372.49 L584.5 374.59 L585 376.65 L585.5 378.68 L586 380.67 L586.5 382.62 L587 384.53 L587.5 386.39 L588 388.22 L588.5 390 L589 391.74 L589.5 393.44 L590 395.08 L590.5 396.69 L591 398.24 L591.5 399.75 L592 401.2 L592.5 402.61 L593 403.97 L593.5 405.27 L594 406.53 L594.5 407.73 L595 408.88 L595.5 409.97 L596 411.01 L596.5 412 L597 412.92 L597.5 413.8 L598 414.61 L598.5 415.37 L599 416.08 L599.5 416.72 L600 417.31 L600.5 417.83 L601 418.3 L601.5 418.6 L602 418.6 L602.5 418.6 L603 418.6 L603.5 418.6 L604 418.6 L604.5 418.6 L605 418.6 L605.5 418.6 L606 418.6 L606.5 418.6 L607 418.6 L607.5 418.6 L608 418.58 L608.5 418.13 L609 417.62 L609.5 417.05 L610 416.42 L610.5 415.73 L611 414.97 L611.5 414.16 L612 413.28 L612.5 412.35 L613 411.35 L613.5 410.3 L614 409.19 L614.5 408.03 L615 406.8 L615.5 405.52 L616 404.19 L616.5 402.8 L617 401.36 L617.5 399.86 L618 398.31 L618.5 396.72 L619 395.07 L619.5 393.37 L620 391.62 L620.5 389.83 L621 387.99 L621.5 386.1 L622 384.17 L622.5 382.2 L623 380.18 L623.5 378.12 L624 376.02 L624.5 373.89 L625 371.71 L625.5 369.5 L626 367.26 L626.5 364.98 L627 362.67 L627.5 360.32 L628 357.95 L628.5 355.55 L629 353.12 L629.5 350.66 L630 348.18 L630.5 345.67 L631 343.15 L631.5 340.6 L632 338.03 L632.5 335.45 L633 332.85 L633.5 330.23 L634 327.61 L634.5 324.96 L635 322.31 L635.5 319.65 L636 316.99 L636.5 314.31 L637 311.63 L637.5 308.95 L638 306.27 L638.5 303.58 L639 300.9 L639.5 298.22 L640 295.55 L640.5 292.88 L641 290.22 L641.5 287.56 L642 284.92 L642.5 282.29 L643 279.67 L643.5 277.07 L644 274.48 L644.5 271.91 L645 269.36 L645.5 266.83 L646 264.32 L646.5 261.84 L647 259.37 L647.5 256.94 L648 254.53 L648.5 252.15 L649 249.8 L649.5 247.48 L650 245.2 L650.5 242.94 L651 240.73 L651.5 238.54 L652 236.4 L652.5 234.3 L653 232.23 L653.5 230.2 L654 228.22 L654.5 226.28 L655 224.39 L655.5 222.54 L656 220.73 L656.5 218.98 L657 217.27 L657.5 215.61 L658 214 L658.5 212.44 L659 210.94 L659.5 209.48 L660 208.08 L660.5 206.74 L661 205.45 L661.5 204.21 L662 203.04 L662.5 201.91 L663 200.85 L663.5 199.85 L664 198.9 L664.5 198.01 L665 197.19 L665.5 196.42 L666 195.71 L666.5 195.07 L667 194.49 L667.5 193.97 L668 193.51 L668.5 193.4 L669 193.4 L669.5 193.4 L670 193.4 L670.5 193.4 L671 193.4 L671.5 193.4 L672 193.4 L672.5 193.4 L673 193.4 L673.5 193.4 L674 193.4 L674.5 193.4 L675 193.64 L675.5 194.12 L676 194.66 L676.5 195.26 L677 195.92 L677.5 196.64 L678 197.42 L678.5 198.26 L679 199.16 L679.5 200.12 L680 201.13 L680.5 202.21 L681 203.34 L681.5 204.52 L682 205.77 L682.5 207.06 L683 208.41 L683.5 209.82 L684 211.28 L684.5 212.79 L685 214.35 L685.5 215.96 L686 217.62 L686.5 219.33 L687 221.08 L687.5 222.89 L688 224.73 L688.5 226.63 L689 228.57 L689.5 230.55 L690 232.57 L690.5 234.63 L691 236.73 L691.5 238.87 L692 241.05 L692.5 243.26 L693 245.51 L693.5 247.79 L694 250.1 L694.5 252.44 L695 254.82 L695.5 257.22 L696 259.65 L696.5 262.11 L697 264.59 L697.5 267.09 L698 269.61 L698.5 272.16 L699 274.72 L699.5 277.31 L700 279.9 L700.5 282.52 L701 285.14 L701.5 287.78 L702 290.43 L702.5 293.09 L703 295.76 L703.5 298.43 L704 301.11 L704.5 303.79 L705 306.48 L705.5 309.16 L706 311.84 L706.5 314.52 L707 317.2 L707.5 319.87 L708 322.54 L708.5 325.2 L709 327.84 L709.5 330.48 L710 333.11 L710.5 335.72 L711 338.31 L711.5 340.89 L712 343.45 L712.5 345.99 L713 348.51 L713.5 351.01 L714 353.49 L714.5 355.94 L715 358.36 L715.5 360.76 L716 363.13 L716.5 365.46 L717 367.77 L717.5 370.05 L718 372.29 L718.5 374.49 L719 376.66 L719.5 378.79 L720 380.89 L720.5 382.94 L721 384.95 L721.5 386.93 L722 388.85 L722.5 390.74 L723 392.58 L723.5 394.37 L724 396.12 L724.5 397.82 L725 399.47 L725.5 401.07 L726 402.62 L726.5 404.12 L727 405.57 L727.5 406.96 L728 408.3 L728.5 409.59 L729 410.82 L729.5 411.99 L730 413.11 L730.5 414.17 L731 415.18 L731.5 416.12 L732 417.01 L732.5 417.84 L733 418.61 L733.5 419.32 L734 419.97 L734.5 420.55 L735 421.08 L735.5 421.55 L736 421.7 L736.5 421.7 L737 421.7 L737.5 421.7 L738 421.7 L738.5 421.7 L739 421.7 L739.5 421.7 L740 421.7 L740.5 421.7 L741 421.7 L741.5 421.7 L742 421.7 L742.5 421.58 L743 421.12 L743.5 420.6 L744 420.02 L744.5 419.38 L745 418.68 L745.5 417.92 L746 417.11 L746.5 416.23 L747 415.3 L747.5 414.31 L748 413.26 L748.5 412.16 L749 411 L749.5 409.79 L750 408.52 L750.5 407.2 L751 405.82 L751.5 404.4 L752 402.92 L752.5 401.39 L753 399.81 L753.5 398.18 L754 396.5 L754.5 394.78 L755 393.01 L755.5 391.19 L756 389.33 L756.5 387.43 L757 385.48 L757.5 383.49 L758 381.46 L758.5 379.4 L759 377.29 L759.5 375.14 L760 372.96 L760.5 370.75 L761 368.5 L761.5 366.22 L762 363.91 L762.5 361.56 L763 359.19 L763.5 356.79 L764 354.37 L764.5 351.91 L765 349.44 L765.5 346.94 L766 344.42 L766.5 341.88 L767 339.33 L767.5 336.75 L768 334.16 L768.5 331.56 L769 328.94 L769.5 326.31 L770 323.67 L770.5 321.03 L771 318.37 L771.5 315.71 L772 313.04 L772.5 310.37 L773 307.7 L773.5 305.03 L774 302.36 L774.5 299.69 L775 297.03 L775.5 294.37 L776 291.71 L776.5 289.07 L777 286.43 L777.5 283.81 L778 281.2 L778.5 278.6 L779 276.01 L779.5 273.45 L780 270.9 L780.5 268.37 L781 265.86 L781.5 263.37 L782 260.9 L782.5 258.46 L783 256.05 L783.5 253.66 L784 251.3 L784.5 248.97 L785 246.67 L785.5 244.4 L786 242.16 L786.5 239.96 L787 237.79 L787.5 235.66 L788 233.57 L788.5 231.52 L789 229.51 L789.5 227.53 L790 225.6 L790.5 223.72 L791 221.87 L791.5 220.08 L792 218.32 L792.5 216.62 L793 214.96 L793.5 213.35 L794 211.79 L794.5 210.28 L795 208.83 L795.5 207.42 L796 206.07 L796.5 204.77 L797 203.52 L797.5 202.33 L798 201.19 L798.5 200.11 L799 199.09 L799.5 198.12 L800 197.21 L800.5 196.36 L801 195.57 L801.5 194.83 L802 194.16 L802.5 193.54 L803 192.99 L803.5 192.49 L804 192.1 L804.5 192.1 L805 192.1 L805.5 192.1 L806 192.1 L806.5 192.1 L807 192.1 L807.5 192.1 L808 192.1 L808.5 192.1 L809 192.1 L809.5 192.1 L810 192.1 L810.5 192.1 L811 192.5 L811.5 193.01 L812 193.59 L812.5 194.23 L813 194.93 L813.5 195.69 L814 196.52 L814.5 197.41 L815 198.36 L815.5 199.37 L816 200.44 L816.5 201.58 L817 202.77 L817.5 204.02 L818 205.32 L818.5 206.69 L819 208.11 L819.5 209.58 L820 211.11 L820.5 212.7 L821 214.33 L821.5 216.02 L822 217.76 L822.5 219.55 L823 221.39 L823.5 223.28 L824 225.21 L824.5 227.19 L825 229.22 L825.5 231.28 L826 233.39 L826.5 235.55 L827 237.74 L827.5 239.97 L828 242.24 L828.5 244.54 L829 246.88 L829.5 249.25 L830 251.66 L830.5 254.1 L831 256.56 L831.5 259.06 L832 261.58 L832.5 264.13 L833 266.7 L833.5 269.29 L834 271.91 L834.5 274.54 L835 277.19 L835.5 279.86 L836 282.55 L836.5 285.25 L837 287.96 L837.5 290.68 L838 293.41 L838.5 296.15 L839 298.89 L839.5 301.64 L840 304.4 L840.5 307.15 L841 309.9 L841.5 312.66 L842 315.41 L842.5 318.15 L843 320.89 L843.5 323.62 L844 326.34 L844.5 329.05 L845 331.75 L845.5 334.44 L846 337.11 L846.5 339.76 L847 342.39 L847.5 345.01 L848 347.6 L848.5 350.17 L849 352.72 L849.5 355.24 L850 357.74 L850.5 360.2 L851 362.64 L851.5 365.05 L852 367.42 L852.5 369.76 L853 372.06 L853.5 374.33 L854 376.56 L854.5 378.75 L855 380.91 L855.5 383.02 L856 385.08 L856.5 387.11 L857 389.09 L857.5 391.02 L858 392.91 L858.5 394.75 L859 396.54 L859.5 398.28 L860 399.97 L860.5 401.6 L861 403.19 L861.5 404.72 L862 406.19 L862.5 407.61 L863 408.98 L863.5 410.28 L864 411.53 L864.5 412.72 L865 413.86 L865.5 414.93 L866 415.94 L866.5 416.89 L867 417.78 L867.5 418.61 L868 419.37 L868.5 420.07 L869 420.71 L869.5 421.29 L870 421.8 L870.5 422.2 L871 422.2 L871.5 422.2 L872 422.2 L872.5 422.2 L873 422.2 L873.5 422.2 L874 422.2 L874.5 422.2 L875 422.2 L875.5 422.2 L876 422.2 L876.5 422.2 L877 422.11 L877.5 421.63 L878 421.09 L878.5 420.48 L879 419.8 L879.5 419.05 L880 418.25 L880.5 417.37 L881 416.43 L881.5 415.43 L882 414.37 L882.5 413.24 L883 412.05 L883.5 410.8 L884 409.5 L884.5 408.13 L885 406.7 L885.5 405.21 L886 403.67 L886.5 402.07 L887 400.41 L887.5 398.7 L888 396.94 L888.5 395.13 L889 393.26 L889.5 391.34 L890 389.38 L890.5 387.37 L891 385.31 L891.5 383.2 L892 381.05 L892.5 378.86 L893 376.62 L893.5 374.35 L894 372.03 L894.5 369.68 L895 367.29 L895.5 364.87 L896 362.41 L896.5 359.92 L897 357.4 L897.5 354.85 L898 352.27 L898.5 349.67 L899 347.04 L899.5 344.38 L900 341.71 L900.5 339.01 L901 336.3 L901.5 333.57 L902 330.82 L902.5 328.06 L903 325.29 L903.5 322.51 L904 319.72 L904.5 316.92 L905 314.11 L905.5 311.3 L906 308.49 L906.5 305.67 L907 302.86 L907.5 300.05 L908 297.24 L908.5 294.44 L909 291.65 L909.5 288.86 L910 286.09 L910.5 283.33 L911 280.58 L911.5 277.84 L912 275.13 L912.5 272.43 L913 269.75 L913.5 267.09 L914 264.46 L914.5 261.85 L915 259.27 L915.5 256.71 L916 254.18 L916.5 251.69 L917 249.22 L917.5 246.79 L918 244.39 L918.5 242.03 L919 239.71 L919.5 237.43 L920 235.19 L920.5 232.98 L921 230.83 L921.5 228.71 L922 226.64 L922.5 224.62 L923 222.64 L923.5 220.72 L924 218.84 L924.5 217.02 L925 215.24 L925.5 213.52 L926 211.86 L926.5 210.25 L927 208.69 L927.5 207.2 L928 205.76 L928.5 204.37 L929 203.05 L929.5 201.79 L930 200.59 L930.5 199.45 L931 198.37 L931.5 197.36 L932 196.41 L932.5 195.52 L933 194.7 L933.5 193.95 L934 193.26 L934.5 192.63 L935 192.07 L935.5 191.58 L936 191.4 L936.5 191.4 L937 191.4 L937.5 191.4 L938 191.4 L938.5 191.4 L939 191.4 L939.5 191.4 L940 191.4 L940.5 191.4 L941 191.4 L941.5 191.4 L942 191.4 L942.5 191.65 L943 192.13 L943.5 192.68 L944 193.28 L944.5 193.95 L945 194.68 L945.5 195.47 L946 196.32 L946.5 197.23 L947 198.2 L947.5 199.23 L948 200.32 L948.5 201.46 L949 202.67 L949.5 203.92 L950 205.24 L950.5 206.6 L951 208.03 L951.5 209.5 L952 211.03 L952.5 212.61 L953 214.24 L953.5 215.92 L954 217.65 L954.5 219.43 L955 221.26 L955.5 223.13 L956 225.05 L956.5 227.01 L957 229.02 L957.5 231.06 L958 233.15 L958.5 235.28 L959 237.45 L959.5 239.65 L960 241.89 L960.5 244.17 L961 246.48 L961.5 248.82 L962 251.19 L962.5 253.6 L963 256.03 L963.5 258.49 L964 260.98 L964.5 263.49 L965 266.02 L965.5 268.58 L966 271.16 L966.5 273.76 L967 276.37 L967.5 279 L968 281.65 L968.5 284.31 L969 286.98 L969.5 289.67 L970 292.36 L970.5 295.06 L971 297.77 L971.5 300.48 L972 303.19 L972.5 305.91 L973 308.63 L973.5 311.35 L974 314.06 L974.5 316.77 L975 319.48 L975.5 322.18 L976 324.87 L976.5 327.55 L977 330.22 L977.5 332.88 L978 335.52 L978.5 338.15 L979 340.76 L979.5 343.36 L980 345.93 L980.5 348.48 L981 351.01 L981.5 353.52 L982 356 L982.5 358.46 L983 360.88 L983.5 363.28 L984 365.65 L984.5 367.99 L985 370.29 L985.5 372.56 L986 374.79 L986.5 376.99 L987 379.15 L987.5 381.27 L988 383.35 L988.5 385.39 L989 387.38 L989.5 389.34 L990 391.25 L990.5 393.11 L991 394.93 L991.5 396.7 L992 398.42 L992.5 400.09 L993 401.71 L993.5 403.28 L994 404.8 L994.5 406.26 L995 407.67 L995.5 409.03 L996 410.33 L996.5 411.58 L997 412.77 L997.5 413.9 L998 414.98 L998.5 415.99 L999 416.95 L999.5 417.85 L1000 418.69 L1000.5 419.47 L1001 420.19 L1001.5 420.84 L1002 421.44 L1002.5 421.97 L1003 422.44 L1003.5 422.6 L1004 422.6 L1004.5 422.6 L1005 422.6 L1005.5 422.6 L1006 422.6 L1006.5 422.6 L1007 422.6 L1007.5 422.6 L1008 422.6 L1008.5 422.6 L1009 422.6 L1009.5 422.6 L1010 422.42 L1010.5 421.94 L1011 421.4 L1011.5 420.8 L1012 420.13 L1012.5 419.4 L1013 418.61 L1013.5 417.75 L1014 416.84 L1014.5 415.87 L1015 414.83 L1015.5 413.74 L1016 412.59 L1016.5 411.38 L1017 410.11 L1017.5 408.79 L1018 407.41 L1018.5 405.97 L1019 404.48 L1019.5 402.94 L1020 401.34 L1020.5 399.69 L1021 398 L1021.5 396.25 L1022 394.45 L1022.5 392.6 L1023 390.71 L1023.5 388.77 L1024 386.79 L1024.5 384.76 L1025 382.69 L1025.5 380.58 L1026 378.42 L1026.5 376.23 L1027 374 L1027.5 371.73 L1028 369.43 L1028.5 367.09 L1029 364.72 L1029.5 362.32 L1030 359.88 L1030.5 357.42 L1031 354.93 L1031.5 352.42 L1032 349.87 L1032.5 347.31 L1033 344.72 L1033.5 342.11 L1034 339.48 L1034.5 336.84 L1035 334.17 L1035.5 331.49 L1036 328.8 L1036.5 326.1 L1037 323.38 L1037.5 320.66 L1038 317.93 L1038.5 315.19 L1039 312.44 L1039.5 309.7 L1040 306.95 L1040.5 304.2 L1041 301.45 L1041.5 298.71 L1042 295.97 L1042.5 293.23 L1043 290.51 L1043.5 287.79 L1044 285.08 L1044.5 282.38 L1045 279.7 L1045.5 277.03 L1046 274.37 L1046.5 271.74 L1047 269.12 L1047.5 266.52 L1048 263.95 L1048.5 261.4 L1049 258.87 L1049.5 256.37 L1050 253.9 L1050.5 251.45 L1051 249.04 L1051.5 246.65 L1052 244.3 L1052.5 241.99 L1053 239.7 L1053.5 237.46 L1054 235.25 L1054.5 233.08 L1055 230.95 L1055.5 228.86 L1056 226.82 L1056.5 224.82 L1057 222.86 L1057.5 220.95 L1058 219.08 L1058.5 217.27 L1059 215.5 L1059.5 213.78 L1060 212.11 L1060.5 210.49 L1061 208.93 L1061.5 207.42 L1062 205.96 L1062.5 204.56 L1063 203.21 L1063.5 201.92 L1064 200.69 L1064.5 199.52 L1065 198.4 L1065.5 197.34 L1066 196.34 L1066.5 195.4 L1067 194.53 L1067.5 193.71 L1068 192.96 L1068.5 192.26 L1069 191.63 L1069.5 191.07 L1070 190.56 L1070.5 190.2 L1071 190.2 L1071.5 190.2 L1072 190.2 L1072.5 190.2 L1073 190.2 L1073.5 190.2 L1074 190.2 L1074.5 190.2 L1075 190.2 L1075.5 190.2 L1076 190.2 L1076.5 190.2 L1077 190.2 L1077.5 190.64 L1078 191.15 L1078.5 191.72 L1079 192.36 L1079.5 193.06 L1080 193.82 L1080.5 194.64 L1081 195.52 L1081.5 196.46 L1082 197.46 L1082.5 198.52 L1083 199.64 L1083.5 200.81 L1084 202.04 L1084.5 203.33 L1085 204.68 L1085.5 206.08 L1086 207.53 L1086.5 209.04 L1087 210.6 L1087.5 212.21 L1088 213.87 L1088.5 215.59 L1089 217.35 L1089.5 219.16 L1090 221.02 L1090.5 222.92 L1091 224.87 L1091.5 226.86 L1092 228.9 L1092.5 230.97 L1093 233.09 L1093.5 235.25 L1094 237.45 L1094.5 239.68 L1095 241.95 L1095.5 244.26 L1096 246.6 L1096.5 248.97 L1097 251.37 L1097.5 253.81 L1098 256.27 L1098.5 258.75 L1099 261.27 L1099.5 263.81 L1100 266.37 L1100.5 268.95 L1101 271.56 L1101.5 274.18 L1102 276.82 L1102.5 279.47 L1103 282.14 L1103.5 284.83 L1104 287.52 L1104.5 290.23 L1105 292.94 L1105.5 295.67 L1106 298.4 L1106.5 301.13 L1107 303.86 L1107.5 306.6 L1108 309.34 L1108.5 312.07 L1109 314.8 L1109.5 317.53 L1110 320.26 L1110.5 322.97 L1111 325.68 L1111.5 328.37 L1112 331.06 L1112.5 333.73 L1113 336.38 L1113.5 339.02 L1114 341.64 L1114.5 344.25 L1115 346.83 L1115.5 349.39 L1116 351.93 L1116.5 354.45 L1117 356.93 L1117.5 359.39 L1118 361.83 L1118.5 364.23 L1119 366.6 L1119.5 368.94 L1120 371.25 L1120.5 373.52 L1121 375.75 L1121.5 377.95 L1122 380.11 L1122.5 382.23 L1123 384.3 L1123.5 386.34 L1124 388.33 L1124.5 390.28 L1125 392.18 L1125.5 394.04 L1126 395.85 L1126.5 397.61 L1127 399.33 L1127.5 400.99 L1128 402.6 L1128.5 404.16 L1129 405.67 L1129.5 407.12 L1130 408.52 L1130.5 409.87 L1131 411.16 L1131.5 412.39 L1132 413.56 L1132.5 414.68 L1133 415.74 L1133.5 416.74 L1134 417.68 L1134.5 418.56 L1135 419.38 L1135.5 420.14 L1136 420.84 L1136.5 421.48 L1137 422.05 L1137.5 422.56 L1138 423 L1138.5 423 L1139 423 L1139.5 423 L1140 423 L1140.5 423 L1141 423 L1141.5 423 L1142 423 L1142.5 423 L1143 423 L1143.5 423 L1144 423 L1144.5 423 L1145 422.55 L1145.5 422.02 L1146 421.43 L1146.5 420.76 L1147 420.04 L1147.5 419.24 L1148 418.38 L1148.5 417.46 L1149 416.48 L1149.5 415.43 L1150 414.32 L1150.5 413.15 L1151 411.91 L1151.5 410.62 L1152 409.27 L1152.5 407.85 L1153 406.38 L1153.5 404.86 L1154 403.27 L1154.5 401.63 L1155 399.94 L1155.5 398.19 L1156 396.39 L1156.5 394.54 L1157 392.64 L1157.5 390.69 L1158 388.69 L1158.5 386.64 L1159 384.55 L1159.5 382.41 L1160 380.23 L1160.5 378.01 L1161 375.75 L1161.5 373.44 L1162 371.1 L1162.5 368.72 L1163 366.31 L1163.5 363.86 L1164 361.38 L1164.5 358.87 L1165 356.33 L1165.5 353.76 L1166 351.16 L1166.5 348.53 L1167 345.89 L1167.5 343.22 L1168 340.52 L1168.5 337.81 L1169 335.09 L1169.5 332.34 L1170 329.58 L1170.5 326.81 L1171 324.02 L1171.5 321.23 L1172 318.43 L1172.5 315.62 L1173 312.8 L1173.5 309.98 L1174 307.16 L1174.5 304.34 L1175 301.52 L1175.5 298.71 L1176 295.9 L1176.5 293.09 L1177 290.29 L1177.5 287.5 L1178 284.73 L1178.5 281.96 L1179 279.21 L1179.5 276.48 L1180 273.76 L1180.5 271.06 L1181 268.38 L1181.5 265.72 L1182 263.09 L1182.5 260.48 L1183 257.9 L1183.5 255.34 L1184 252.82 L1184.5 250.33 L1185 247.86 L1185.5 245.44 L1186 243.04 L1186.5 240.69 L1187 238.37 L1187.5 236.09 L1188 233.85 L1188.5 231.65 L1189 229.5 L1189.5 227.39 L1190 225.32 L1190.5 223.31 L1191 221.33 L1191.5 219.41 L1192 217.54 L1192.5 215.72 L1193 213.95 L1193.5 212.24 L1194 210.58 L1194.5 208.97 L1195 207.42 L1195.5 205.93 L1196 204.49 L1196.5 203.11 L1197 201.8 L1197.5 200.54 L1198 199.34 L1198.5 198.21 L1199 197.13 L1199.5 196.12 L1200 195.18 L1200.5 194.29 L1201 193.47 L1201.5 192.72 L1202 192.03 L1202.5 191.41 L1203 190.85 L1203.5 190.36 L1204 190.2 L1204.5 190.2 L1205 190.2 L1205.5 190.2 L1206 190.2 L1206.5 190.2 L1207 190.2 L1207.5 190.2 L1208 190.2 L1208.5 190.2 L1209 190.2 L1209.5 190.2 L1210 190.2 L1210.5 190.4 L1211 190.87 L1211.5 191.41 L1212 192 L1212.5 192.66 L1213 193.37 L1213.5 194.14 L1214 194.98 L1214.5 195.87 L1215 196.82 L1215.5 197.82 L1216 198.89 L1216.5 200.01 L1217 201.18 L1217.5 202.41 L1218 203.7 L1218.5 205.04 L1219 206.43 L1219.5 207.88 L1220 209.37 L1220.5 210.92 L1221 212.52 L1221.5 214.17 L1222 215.86 L1222.5 217.61 L1223 219.4 L1223.5 221.23 L1224 223.11 L1224.5 225.04 L1225 227.01 L1225.5 229.02 L1226 231.07 L1226.5 233.15 L1227 235.28 L1227.5 237.45 L1228 239.65 L1228.5 241.89 L1229 244.16 L1229.5 246.46 L1230 248.8 L1230.5 251.16 L1231 253.55 L1231.5 255.98 L1232 258.43 L1232.5 260.9 L1233 263.4 L1233.5 265.92 L1234 268.46 L1234.5 271.02 L1235 273.6 L1235.5 276.2 L1236 278.81 L1236.5 281.44 L1237 284.08 L1237.5 286.74 L1238 289.4 L1238.5 292.07 L1239 294.75 L1239.5 297.44 L1240 300.13 L1240.5 302.82 L1241 305.52 L1241.5 308.22 L1242 310.91 L1242.5 313.61 L1243 316.3 L1243.5 318.98 L1244 321.66 L1244.5 324.33 L1245 327 L1245.5 329.65 L1246 332.29 L1246.5 334.91 L1247 337.52 L1247.5 340.12 L1248 342.69 L1248.5 345.25 L1249 347.79 L1249.5 350.3 L1250 352.8 L1250.5 355.27 L1251 357.71 L1251.5 360.13 L1252 362.52 L1252.5 364.87 L1253 367.2 L1253.5 369.5 L1254 371.76 L1254.5 373.99 L1255 376.19 L1255.5 378.35 L1256 380.47 L1256.5 382.55 L1257 384.59 L1257.5 386.59 L1258 388.55 L1258.5 390.47 L1259 392.34 L1259.5 394.16 L1260 395.95 L1260.5 397.68 L1261 399.37 L1261.5 401 L1262 402.59 L1262.5 404.13 L1263 405.62 L1263.5 407.05 L1264 408.43 L1264.5 409.76 L1265 411.04 L1265.5 412.26 L1266 413.42 L1266.5 414.53 L1267 415.58 L1267.5 416.58 L1268 417.52 L1268.5 418.4 L1269 419.22 L1269.5 419.98 L1270 420.68 L1270.5 421.32 L1271 421.9 L1271.5 422.43 L1272 422.89 L1272.5 423 L1273 423 L1273.5 423 L1274 423 L1274.5 423 L1275 423 L1275.5 423 L1276 423 L1276.5 423 L1277 423 L1277.5 423" fill="none" stroke="#f0141e" stroke-width="1.0" stroke-linejoin="round" shape-rendering="crispEdges"/>
<path d="M72 366.94 L72.5 368.59 L73 363.04 L73.5 373.34 L74 364.68 L74.5 365.93 L75 357.51 L75.5 366.63 L76 373.62 L76.5 382.2 L77 379.34 L77.5 359.42 L78 386.85 L78.5 373.98 L79 380.93 L79.5 383.09 L80 383.41 L80.5 382.69 L81 398.21 L81.5 386.68 L82 383.66 L82.5 381.11 L83 384.95 L83.5 384.54 L84 385.55 L84.5 385.97 L85 386.73 L85.5 387.3 L86 388.56 L86.5 388.74 L87 388.51 L87.5 391.32 L88 392.44 L88.5 390.6 L89 393.03 L89.5 393.07 L90 393.92 L90.5 396.64 L91 393.91 L91.5 395.31 L92 397.63 L92.5 397.82 L93 399.19 L93.5 400.93 L94 400.93 L94.5 401.21 L95 400.94 L95.5 401.71 L96 402.72 L96.5 401.83 L97 403.27 L97.5 400.46 L98 398.86 L98.5 398.95 L99 399.13 L99.5 396.97 L100 394.57 L100.5 393 L101 390.71 L101.5 391.92 L102 389.65 L102.5 387.73 L103 387.23 L103.5 388.1 L104 382.35 L104.5 377.99 L105 376.37 L105.5 375.35 L106 371.96 L106.5 368.44 L107 363.33 L107.5 362.26 L108 359.85 L108.5 355.55 L109 354.25 L109.5 349.45 L110 349.05 L110.5 345.94 L111 341.88 L111.5 338.29 L112 336.15 L112.5 333.6 L113 334.56 L113.5 333.14 L114 332.71 L114.5 332.3 L115 330.87 L115.5 331.43 L116 330 L116.5 330.36 L117 330.43 L117.5 329.66 L118 329.02 L118.5 328.26 L119 329.92 L119.5 331.19 L120 327.66 L120.5 318.76 L121 316.6 L121.5 317.32 L122 312.03 L122.5 307.29 L123 306.49 L123.5 313.54 L124 314.78 L124.5 307.76 L125 319.53 L125.5 312.29 L126 299.35 L126.5 294.86 L127 299.95 L127.5 285.2 L128 291.49 L128.5 276.96 L129 275.15 L129.5 274.87 L130 247.12 L130.5 260.74 L131 262.63 L131.5 252.48 L132 260.95 L132.5 266.71 L133 248.33 L133.5 252.9 L134 243.63 L134.5 248.74 L135 218.08 L135.5 231.73 L136 242.55 L136.5 249.5 L137 235.11 L137.5 218.78 L138 236.95 L138.5 232.8 L139 243.49 L139.5 241.43 L140 235.87 L140.5 237.19 L141 243.92 L141.5 239.39 L142 232.95 L142.5 221.51 L143 212.6 L143.5 227.42 L144 231.56 L144.5 226.63 L145 231.52 L145.5 218.42 L146 227.07 L146.5 241.79 L147 224.15 L147.5 222.41 L148 223.7 L148.5 220.59 L149 221.29 L149.5 219.94 L150 219.88 L150.5 218.96 L151 217.41 L151.5 218.4 L152 215.9 L152.5 217.61 L153 217.18 L153.5 214.99 L154 216.15 L154.5 214.88 L155 213.05 L155.5 212.18 L156 214.22 L156.5 210.88 L157 208.43 L157.5 207.99 L158 208.29 L158.5 207.53 L159 206.13 L159.5 205.85 L160 203.88 L160.5 202.69 L161 201.54 L161.5 199.42 L162 201.2 L162.5 202.79 L163 200.74 L163.5 203.21 L164 203 L164.5 203.09 L165 203.69 L165.5 204.73 L166 204.39 L166.5 202.41 L167 205.54 L167.5 206.36 L168 206.61 L168.5 208.46 L169 209.92 L169.5 211.3 L170 215.54 L170.5 215.94 L171 216.45 L171.5 217.56 L172 218.96 L172.5 222.33 L173 225.58 L173.5 227.87 L174 230.68 L174.5 232.79 L175 234.94 L175.5 238.49 L176 241.51 L176.5 244.78 L177 246.42 L177.5 249.78 L178 253.61 L178.5 257.29 L179 260.86 L179.5 265.22 L180 268.12 L180.5 273.34 L181 274.09 L181.5 275.36 L182 274.68 L182.5 276.71 L183 277 L183.5 269.3 L184 282.38 L184.5 282.04 L185 290.86 L185.5 241.95 L186 279.7 L186.5 283.71 L187 277.98 L187.5 274.25 L188 301.32 L188.5 292.18 L189 291.2 L189.5 299.74 L190 283.83 L190.5 311.87 L191 299.67 L191.5 303.14 L192 306.31 L192.5 310.05 L193 314.83 L193.5 308.94 L194 304.21 L194.5 323.38 L195 331.46 L195.5 314.5 L196 323.78 L196.5 336.35 L197 338.25 L197.5 350.43 L198 352.17 L198.5 356.21 L199 369.83 L199.5 370.04 L200 374.18 L200.5 358.96 L201 405.96 L201.5 374.43 L202 372.34 L202.5 366.62 L203 380.04 L203.5 358.63 L204 359.88 L204.5 340.64 L205 366.81 L205.5 368.43 L206 365.33 L206.5 365.64 L207 372.23 L207.5 358.81 L208 371.38 L208.5 373.69 L209 371.86 L209.5 380.87 L210 374.94 L210.5 376.63 L211 399.83 L211.5 361.33 L212 374.81 L212.5 382.15 L213 385.48 L213.5 373.67 L214 382.16 L214.5 381.36 L215 385.15 L215.5 385.71 L216 384.13 L216.5 384 L217 383.45 L217.5 386.69 L218 385.83 L218.5 386.57 L219 387.29 L219.5 386.71 L220 388.82 L220.5 389.57 L221 390.37 L221.5 390.86 L222 390.26 L222.5 391.52 L223 394.35 L223.5 394.23 L224 395.33 L224.5 394.51 L225 395.85 L225.5 395.95 L226 397.64 L226.5 400.21 L227 398.66 L227.5 399.63 L228 400.12 L228.5 402.57 L229 401.59 L229.5 402.72 L230 403.1 L230.5 402.45 L231 401.19 L231.5 401.13 L232 400.66 L232.5 400.14 L233 397.01 L233.5 394.08 L234 393.96 L234.5 394.84 L235 392.21 L235.5 389.69 L236 387.2 L236.5 386.42 L237 385.93 L237.5 384.63 L238 383 L238.5 379.55 L239 376.57 L239.5 374.15 L240 370.47 L240.5 368.06 L241 364.49 L241.5 360.57 L242 358.39 L242.5 355.85 L243 353.63 L243.5 352.03 L244 347.8 L244.5 344.3 L245 342.96 L245.5 337.89 L246 336.58 L246.5 333.04 L247 332.97 L247.5 333.55 L248 329.97 L248.5 332.8 L249 330.44 L249.5 331.55 L250 330.4 L250.5 331.13 L251 330.42 L251.5 328.79 L252 327.46 L252.5 329.86 L253 325.91 L253.5 326.4 L254 321.31 L254.5 325.81 L255 314.75 L255.5 316.65 L256 316.79 L256.5 333.65 L257 307.6 L257.5 304.43 L258 298.3 L258.5 300.11 L259 308.14 L259.5 304.68 L260 298.91 L260.5 294.59 L261 286.78 L261.5 283.59 L262 277.21 L262.5 283.99 L263 281.66 L263.5 268.02 L264 262.53 L264.5 264.63 L265 253.76 L265.5 254.21 L266 251.44 L266.5 250.41 L267 261.12 L267.5 246 L268 241.92 L268.5 247.34 L269 248.03 L269.5 205.82 L270 241.23 L270.5 248.26 L271 256.03 L271.5 240.38 L272 237.87 L272.5 238.14 L273 247.19 L273.5 241.94 L274 224.8 L274.5 233.72 L275 234.96 L275.5 248.06 L276 228.92 L276.5 222.01 L277 232.45 L277.5 231.06 L278 231.19 L278.5 228.26 L279 226.52 L279.5 221.16 L280 223.94 L280.5 225.27 L281 223.62 L281.5 221.09 L282 223.15 L282.5 222.38 L283 222.45 L283.5 221.79 L284 221.15 L284.5 220.9 L285 218.61 L285.5 219.16 L286 217.47 L286.5 218.87 L287 216.26 L287.5 216.63 L288 215.38 L288.5 215.56 L289 215.75 L289.5 213.13 L290 214.16 L290.5 212.8 L291 212.43 L291.5 210.27 L292 209.75 L292.5 208 L293 206.85 L293.5 206.77 L294 206.38 L294.5 203.48 L295 201.92 L295.5 201.04 L296 202.53 L296.5 201.21 L297 201.83 L297.5 202.32 L298 202.57 L298.5 203.71 L299 203.58 L299.5 203.28 L300 205.07 L300.5 206.39 L301 205.48 L301.5 205.65 L302 209.12 L302.5 209.45 L303 209.69 L303.5 211.89 L304 213.12 L304.5 215.92 L305 215.28 L305.5 215.92 L306 219.31 L306.5 222.19 L307 225.16 L307.5 225.71 L308 229.04 L308.5 232.47 L309 233.07 L309.5 236.06 L310 238.78 L310.5 243.64 L311 245.33 L311.5 248.16 L312 253.51 L312.5 254.94 L313 257.99 L313.5 261.92 L314 267.18 L314.5 270.7 L315 272.63 L315.5 274.1 L316 274.62 L316.5 275.4 L317 277.42 L317.5 278.47 L318 276.03 L318.5 268.83 L319 285.84 L319.5 282.62 L320 249.02 L320.5 291.37 L321 270.31 L321.5 290.78 L322 251.09 L322.5 303.79 L323 287.78 L323.5 284.71 L324 299.42 L324.5 326.15 L325 311.93 L325.5 297.97 L326 308.56 L326.5 292.54 L327 311 L327.5 309.84 L328 325.44 L328.5 316.99 L329 318.7 L329.5 326.97 L330 323.35 L330.5 327.29 L331 346 L331.5 321.97 L332 355.55 L332.5 370.06 L333 361.05 L333.5 359.35 L334 361.51 L334.5 376.24 L335 407.73 L335.5 364.8 L336 369.58 L336.5 365.95 L337 374.14 L337.5 370.95 L338 372.67 L338.5 363.68 L339 370.45 L339.5 329.53 L340 341.95 L340.5 372.71 L341 361.33 L341.5 366.25 L342 370.51 L342.5 358.95 L343 378.72 L343.5 382.95 L344 377.14 L344.5 378.6 L345 364.6 L345.5 388.92 L346 383.52 L346.5 383.28 L347 386.43 L347.5 384.01 L348 383.15 L348.5 386.72 L349 384.94 L349.5 387.57 L350 388.53 L350.5 388.64 L351 386.26 L351.5 386.1 L352 386.12 L352.5 387.67 L353 387.21 L353.5 388.5 L354 390.94 L354.5 389.74 L355 391.37 L355.5 392.13 L356 392.15 L356.5 393.96 L357 394.26 L357.5 393.18 L358 394.93 L358.5 396.25 L359 397.97 L359.5 397.06 L360 398.68 L360.5 398.89 L361 399.61 L361.5 401.56 L362 401.24 L362.5 402.74 L363 402.51 L363.5 403.26 L364 404.11 L364.5 403.07 L365 405.2 L365.5 406.21 L366 403.73 L366.5 401.94 L367 400.15 L367.5 399.53 L368 397.88 L368.5 397.4 L369 394.33 L369.5 395.06 L370 393.14 L370.5 392.1 L371 390.68 L371.5 388.92 L372 388.44 L372.5 385.47 L373 381.99 L373.5 380.36 L374 378.53 L374.5 373.85 L375 371.39 L375.5 368.96 L376 364.79 L376.5 361.86 L377 356.99 L377.5 355.55 L378 353.47 L378.5 350.69 L379 350.86 L379.5 344.47 L380 341.4 L380.5 339.38 L381 336.76 L381.5 335.94 L382 333.68 L382.5 334.78 L383 334.31 L383.5 335.04 L384 333.42 L384.5 333.84 L385 333.62 L385.5 331.75 L386 333.11 L386.5 332.81 L387 320.8 L387.5 332.65 L388 324.48 L388.5 325.7 L389 322.88 L389.5 324.05 L390 319.52 L390.5 317.89 L391 320.24 L391.5 304.58 L392 305.53 L392.5 308.66 L393 298.18 L393.5 301.33 L394 289.11 L394.5 298.64 L395 299.09 L395.5 288.3 L396 289.93 L396.5 289.73 L397 267.71 L397.5 275.76 L398 271.12 L398.5 270.14 L399 255.26 L399.5 256.8 L400 263.69 L400.5 259.17 L401 225.12 L401.5 263.79 L402 256.42 L402.5 248.68 L403 248.97 L403.5 251.86 L404 247.53 L404.5 241.9 L405 240.75 L405.5 222 L406 246.48 L406.5 244.85 L407 237.44 L407.5 227.95 L408 241.58 L408.5 259.7 L409 241.46 L409.5 235.91 L410 231.06 L410.5 232.2 L411 238.66 L411.5 236.7 L412 222.78 L412.5 230.18 L413 225.83 L413.5 238.75 L414 247.15 L414.5 230.43 L415 231.03 L415.5 229.36 L416 229.89 L416.5 228.1 L417 225.95 L417.5 226.41 L418 226.82 L418.5 223.41 L419 225.1 L419.5 222.5 L420 223.85 L420.5 224.17 L421 220.42 L421.5 222.03 L422 220.3 L422.5 219.31 L423 221.14 L423.5 218.9 L424 218.42 L424.5 216.19 L425 215.68 L425.5 215.78 L426 213.41 L426.5 211.63 L427 211.54 L427.5 209.62 L428 209.56 L428.5 208 L429 207.24 L429.5 207.79 L430 207.06 L430.5 207.72 L431 208.18 L431.5 208.65 L432 209.55 L432.5 211.16 L433 209.38 L433.5 209.09 L434 210.9 L434.5 212.06 L435 213.17 L435.5 213.29 L436 215.49 L436.5 218.03 L437 218.57 L437.5 220.45 L438 221.23 L438.5 223.21 L439 224.88 L439.5 224.9 L440 227.6 L440.5 232.43 L441 234.11 L441.5 235.88 L442 238.1 L442.5 241.34 L443 241.45 L443.5 246.65 L444 247.6 L444.5 250.76 L445 254.94 L445.5 258.37 L446 260.85 L446.5 263.92 L447 269.23 L447.5 271.58 L448 271 L448.5 272.28 L449 273.24 L449.5 274.46 L450 274.86 L450.5 283.34 L451 285.62 L451.5 271.68 L452 269.65 L452.5 281.43 L453 276.33 L453.5 288.87 L454 290.23 L454.5 292.02 L455 274.59 L455.5 286.52 L456 296.47 L456.5 288.83 L457 284.34 L457.5 287.35 L458 291.58 L458.5 305.03 L459 302.92 L459.5 308.18 L460 296.56 L460.5 319.88 L461 305.85 L461.5 311.77 L462 321.09 L462.5 319.71 L463 324.35 L463.5 340.25 L464 346.62 L464.5 342.02 L465 343.59 L465.5 353.05 L466 346.65 L466.5 362.45 L467 357.31 L467.5 371.07 L468 348.83 L468.5 363.59 L469 347.72 L469.5 350.98 L470 346.51 L470.5 340.37 L471 355.34 L471.5 374.06 L472 349.66 L472.5 353.41 L473 354.96 L473.5 358.44 L474 347.85 L474.5 366.61 L475 364.76 L475.5 364.57 L476 351.62 L476.5 360.95 L477 360.11 L477.5 363.23 L478 362.06 L478.5 382 L479 365.64 L479.5 365.89 L480 372.67 L480.5 369.18 L481 362.45 L481.5 361.74 L482 373.33 L482.5 363.21 L483 367.81 L483.5 369.53 L484 369.2 L484.5 369.09 L485 371.95 L485.5 370.42 L486 372.48 L486.5 370.48 L487 373.58 L487.5 372.74 L488 373.19 L488.5 374.41 L489 375.15 L489.5 377.09 L490 375.04 L490.5 377.08 L491 378.43 L491.5 378.28 L492 378.47 L492.5 379.24 L493 381.81 L493.5 381.07 L494 382.27 L494.5 381.97 L495 383.01 L495.5 384.67 L496 385.08 L496.5 383.78 L497 383.29 L497.5 382.11 L498 381.47 L498.5 378.63 L499 378.39 L499.5 377.98 L500 375.13 L500.5 375.59 L501 373 L501.5 373.47 L502 372.8 L502.5 370.13 L503 369.05 L503.5 369.54 L504 366.59 L504.5 362.61 L505 360.45 L505.5 360.36 L506 357.9 L506.5 353.91 L507 349.63 L507.5 350.84 L508 349.42 L508.5 346.12 L509 342.59 L509.5 341.35 L510 338.24 L510.5 336.89 L511 334.61 L511.5 331.08 L512 330.07 L512.5 327.93 L513 324.91 L513.5 324.11 L514 325.01 L514.5 324.62 L515 324.83 L515.5 324.58 L516 323.99 L516.5 322.77 L517 323.64 L517.5 321.9 L518 323.68 L518.5 324.44 L519 325.02 L519.5 321.68 L520 321.15 L520.5 318.6 L521 304.61 L521.5 314.79 L522 308.23 L522.5 309.27 L523 309.49 L523.5 307.12 L524 302.69 L524.5 306.53 L525 302.25 L525.5 279.68 L526 303.9 L526.5 331.69 L527 290.05 L527.5 277.83 L528 273.72 L528.5 276.11 L529 286.59 L529.5 292.7 L530 266.58 L530.5 268.59 L531 271.4 L531.5 245.61 L532 279.93 L532.5 257.81 L533 254.34 L533.5 262.41 L534 223.75 L534.5 254.87 L535 262.86 L535.5 239.27 L536 254.18 L536.5 248.78 L537 241.77 L537.5 237.84 L538 245.42 L538.5 241.87 L539 253.87 L539.5 247.65 L540 236.05 L540.5 240.2 L541 239.28 L541.5 261.89 L542 237.61 L542.5 238.5 L543 231.07 L543.5 238.99 L544 238.21 L544.5 236.99 L545 235.05 L545.5 235.12 L546 238.25 L546.5 234.91 L547 238.89 L547.5 227.59 L548 233.24 L548.5 234.46 L549 232.67 L549.5 232.07 L550 233.73 L550.5 231.86 L551 231.44 L551.5 230.68 L552 230.54 L552.5 230.65 L553 230.17 L553.5 227.58 L554 228.97 L554.5 225.63 L555 227.1 L555.5 226.93 L556 227.76 L556.5 224.41 L557 225.48 L557.5 226.05 L558 223.14 L558.5 220.8 L559 222.29 L559.5 219.65 L560 219.5 L560.5 220.89 L561 217.88 L561.5 218.35 L562 215.94 L562.5 216.24 L563 214.72 L563.5 215.93 L564 214.16 L564.5 215.52 L565 216.09 L565.5 215.92 L566 218.25 L566.5 217.81 L567 217.84 L567.5 217.43 L568 217.83 L568.5 217.55 L569 219.76 L569.5 220.11 L570 222.32 L570.5 224.34 L571 223.98 L571.5 225.63 L572 227.62 L572.5 227.72 L573 230.58 L573.5 230.08 L574 233.03 L574.5 236.53 L575 236.72 L575.5 238.96 L576 242.74 L576.5 244.85 L577 247.64 L577.5 248.91 L578 251.7 L578.5 254.09 L579 257.77 L579.5 260.86 L580 263.75 L580.5 266.86 L581 269.17 L581.5 273.54 L582 274.83 L582.5 279.97 L583 281.24 L583.5 283.46 L584 283.28 L584.5 283.91 L585 282.75 L585.5 287.14 L586 262.34 L586.5 276.37 L587 284.28 L587.5 281.69 L588 294.35 L588.5 292.28 L589 294.3 L589.5 281.75 L590 303.99 L590.5 296.51 L591 281.51 L591.5 298.89 L592 310.32 L592.5 304.54 L593 305.65 L593.5 322.87 L594 306.51 L594.5 322.46 L595 314.42 L595.5 312.67 L596 313.77 L596.5 322.48 L597 315.44 L597.5 313.34 L598 326.15 L598.5 339.94 L599 344.49 L599.5 304.29 L600 343.12 L600.5 357.02 L601 326.97 L601.5 403.79 L602 371.24 L602.5 369.56 L603 362.65 L603.5 368.26 L604 360.14 L604.5 366.1 L605 367.15 L605.5 358.41 L606 365.26 L606.5 400.74 L607 368.56 L607.5 364.43 L608 365.45 L608.5 338.63 L609 368.75 L609.5 403.39 L610 362.3 L610.5 373.77 L611 369.21 L611.5 363.17 L612 364.9 L612.5 351.54 L613 383.04 L613.5 373.49 L614 378.26 L614.5 374.51 L615 380.86 L615.5 387.36 L616 405.96 L616.5 379.22 L617 376.29 L617.5 384.25 L618 382.68 L618.5 384.58 L619 381.39 L619.5 380.97 L620 381.46 L620.5 381.79 L621 380.95 L621.5 384.9 L622 382.79 L622.5 384.41 L623 384.17 L623.5 385.55 L624 386.51 L624.5 388.96 L625 387.14 L625.5 387.49 L626 389.54 L626.5 391.14 L627 390.34 L627.5 393.01 L628 392.22 L628.5 391.72 L629 392.08 L629.5 392.78 L630 393.64 L630.5 394.79 L631 394.96 L631.5 395.16 L632 395.82 L632.5 396.69 L633 397.07 L633.5 397.15 L634 399.14 L634.5 397.21 L635 397.28 L635.5 395.21 L636 395.62 L636.5 392.44 L637 390.2 L637.5 389.23 L638 387.58 L638.5 386.7 L639 385.7 L639.5 386.82 L640 383.95 L640.5 382.14 L641 381.45 L641.5 376.94 L642 375.74 L642.5 370.8 L643 368.61 L643.5 367.08 L644 365.61 L644.5 362.46 L645 359.15 L645.5 355.6 L646 350.41 L646.5 351.09 L647 345.73 L647.5 344.33 L648 342.05 L648.5 338.81 L649 335.9 L649.5 332.91 L650 330.69 L650.5 330.67 L651 328.99 L651.5 329.27 L652 328.68 L652.5 329.8 L653 329.01 L653.5 328.96 L654 327.67 L654.5 327.27 L655 327.2 L655.5 326.51 L656 326.55 L656.5 327.04 L657 325.43 L657.5 324.31 L658 322.91 L658.5 316.3 L659 311.04 L659.5 310.74 L660 311.58 L660.5 293.58 L661 297.94 L661.5 305.35 L662 316.21 L662.5 304.17 L663 289.09 L663.5 300.97 L664 293.59 L664.5 285.55 L665 282.81 L665.5 286.33 L666 285.2 L666.5 271.15 L667 270.54 L667.5 260.85 L668 269.51 L668.5 289.19 L669 255.24 L669.5 257.72 L670 261.14 L670.5 252.76 L671 236.37 L671.5 247.5 L672 245.31 L672.5 219.52 L673 250.84 L673.5 248 L674 248.32 L674.5 236.39 L675 246.6 L675.5 245.53 L676 234.79 L676.5 230.85 L677 232.51 L677.5 247 L678 238.91 L678.5 234.97 L679 239.79 L679.5 232.83 L680 222.36 L680.5 229.35 L681 230.35 L681.5 229.02 L682 228.76 L682.5 233.34 L683 234.2 L683.5 222.98 L684 226.51 L684.5 225.25 L685 224.36 L685.5 223.98 L686 222.18 L686.5 221.2 L687 221.86 L687.5 219.54 L688 220.65 L688.5 220.81 L689 219.25 L689.5 220.25 L690 218.58 L690.5 218.76 L691 217.59 L691.5 216.42 L692 218.45 L692.5 215.11 L693 214.68 L693.5 214.25 L694 212.27 L694.5 211.56 L695 211.19 L695.5 210.75 L696 207.98 L696.5 206.89 L697 208.01 L697.5 206.21 L698 205.59 L698.5 202.55 L699 203.28 L699.5 204.34 L700 202.03 L700.5 203.46 L701 204.07 L701.5 204.46 L702 205.27 L702.5 205.46 L703 205.01 L703.5 205.85 L704 207.13 L704.5 206.99 L705 206.63 L705.5 210.48 L706 212.71 L706.5 212.77 L707 215.48 L707.5 213.26 L708 216.7 L708.5 218.21 L709 219.9 L709.5 220.6 L710 226.08 L710.5 227.69 L711 231.83 L711.5 231.53 L712 235.38 L712.5 236.13 L713 240.69 L713.5 244 L714 246.96 L714.5 249.02 L715 254.15 L715.5 256.63 L716 261.13 L716.5 264.66 L717 268.05 L717.5 269.44 L718 275.63 L718.5 275.63 L719 275.9 L719.5 278.17 L720 279.67 L720.5 277.46 L721 279.5 L721.5 289.67 L722 295.72 L722.5 287.9 L723 272.93 L723.5 284.44 L724 284.52 L724.5 326.79 L725 250.11 L725.5 297.72 L726 288.31 L726.5 303.34 L727 286.13 L727.5 302 L728 303.48 L728.5 312.18 L729 302.38 L729.5 310.04 L730 315.02 L730.5 320.9 L731 329.78 L731.5 320.54 L732 325.97 L732.5 329.93 L733 328.71 L733.5 335.9 L734 363.68 L734.5 334.49 L735 354.3 L735.5 346.39 L736 361.71 L736.5 339.22 L737 368.72 L737.5 375.27 L738 376.5 L738.5 363.87 L739 378.9 L739.5 369.53 L740 370.36 L740.5 366.45 L741 337.12 L741.5 370.82 L742 354.49 L742.5 360.56 L743 362.85 L743.5 373.25 L744 379.19 L744.5 371.4 L745 372.78 L745.5 367.82 L746 374.83 L746.5 381.99 L747 368.89 L747.5 383.49 L748 384.82 L748.5 386.12 L749 417.44 L749.5 372.23 L750 384.28 L750.5 380.17 L751 384.96 L751.5 390.86 L752 389.64 L752.5 377.2 L753 386.62 L753.5 388.33 L754 386.53 L754.5 386.44 L755 386.73 L755.5 388.3 L756 388.86 L756.5 391.12 L757 390.45 L757.5 391.85 L758 390.43 L758.5 392.92 L759 393.3 L759.5 392.84 L760 393.14 L760.5 393.67 L761 396.47 L761.5 396.15 L762 396.09 L762.5 398.74 L763 398.88 L763.5 400.61 L764 400.8 L764.5 400.22 L765 401.59 L765.5 402.79 L766 403.67 L766.5 401.99 L767 403.12 L767.5 405.46 L768 402.47 L768.5 403.71 L769 402.14 L769.5 401.16 L770 399.93 L770.5 397.42 L771 398.16 L771.5 395.39 L772 394.43 L772.5 391.08 L773 391.1 L773.5 389.74 L774 388.34 L774.5 386.96 L775 385.43 L775.5 385.01 L776 379.22 L776.5 377.01 L777 373.04 L777.5 370.48 L778 368.37 L778.5 365.76 L779 362.93 L779.5 358.69 L780 356.12 L780.5 353.94 L781 350.47 L781.5 346.81 L782 344.86 L782.5 341.38 L783 338.9 L783.5 337.9 L784 333.61 L784.5 333.3 L785 332.22 L785.5 331.39 L786 333.05 L786.5 331.41 L787 331.39 L787.5 331.24 L788 330.16 L788.5 329.77 L789 331.54 L789.5 328.5 L790 331.79 L790.5 330.7 L791 320.87 L791.5 319.21 L792 319.45 L792.5 318.27 L793 316.73 L793.5 310.35 L794 294.16 L794.5 301.35 L795 335.97 L795.5 299.75 L796 308.17 L796.5 291.23 L797 297.16 L797.5 287.41 L798 286.19 L798.5 287.57 L799 288.49 L799.5 265.62 L800 275.18 L800.5 275.39 L801 267.86 L801.5 268.6 L802 259.28 L802.5 245.31 L803 291.29 L803.5 249.56 L804 251.04 L804.5 262.33 L805 259.96 L805.5 242.77 L806 242.72 L806.5 211.28 L807 246.86 L807.5 244.59 L808 252.24 L808.5 226.05 L809 249.96 L809.5 236.99 L810 218.85 L810.5 261.41 L811 225.95 L811.5 238.09 L812 232.52 L812.5 227.45 L813 201.84 L813.5 230.6 L814 257.51 L814.5 228.46 L815 231.64 L815.5 230.59 L816 224.46 L816.5 237.96 L817 227.11 L817.5 223.98 L818 223.88 L818.5 224.82 L819 223.24 L819.5 221.67 L820 219.65 L820.5 221.13 L821 218.63 L821.5 218.96 L822 218.03 L822.5 219.02 L823 217.2 L823.5 216.44 L824 216.63 L824.5 215.17 L825 215.63 L825.5 214.79 L826 213.85 L826.5 212.69 L827 210.64 L827.5 209.43 L828 210.52 L828.5 210.87 L829 206.8 L829.5 206.67 L830 205.88 L830.5 203.31 L831 202.17 L831.5 202.29 L832 199.61 L832.5 201.54 L833 202.3 L833.5 201.14 L834 204.65 L834.5 199.59 L835 202.09 L835.5 203.15 L836 202.55 L836.5 203.55 L837 204.33 L837.5 204.62 L838 207.76 L838.5 207.48 L839 209.52 L839.5 212.17 L840 212.89 L840.5 213.24 L841 215.13 L841.5 217.6 L842 216.64 L842.5 221.09 L843 224.37 L843.5 226.42 L844 227.74 L844.5 230.16 L845 234.33 L845.5 237.3 L846 239.87 L846.5 242.88 L847 247.16 L847.5 249.08 L848 250.98 L848.5 256.06 L849 260.68 L849.5 263.56 L850 267.56 L850.5 271.74 L851 272.85 L851.5 274.67 L852 277.83 L852.5 276.14 L853 277.13 L853.5 278.71 L854 275.32 L854.5 272.62 L855 267.98 L855.5 286.4 L856 280.94 L856.5 279.95 L857 282.06 L857.5 289.51 L858 288.2 L858.5 294.61 L859 285.79 L859.5 299.28 L860 265.98 L860.5 292.62 L861 308.03 L861.5 294.34 L862 312.31 L862.5 316.32 L863 318.45 L863.5 319.05 L864 322.78 L864.5 313.22 L865 306.71 L865.5 319.32 L866 329.65 L866.5 326.57 L867 344.94 L867.5 349.68 L868 354.38 L868.5 329.78 L869 368.43 L869.5 382.68 L870 366.61 L870.5 359.59 L871 370.24 L871.5 346.55 L872 357.75 L872.5 354.17 L873 373.94 L873.5 370.97 L874 374.96 L874.5 370.66 L875 376.09 L875.5 366.87 L876 363.97 L876.5 373.08 L877 362.55 L877.5 365.71 L878 374.88 L878.5 375.92 L879 374.57 L879.5 385.11 L880 370.39 L880.5 375.44 L881 377.73 L881.5 380.62 L882 384.8 L882.5 381.47 L883 382.55 L883.5 383.3 L884 382.2 L884.5 388.43 L885 386.77 L885.5 390.78 L886 376 L886.5 386.15 L887 385.4 L887.5 388.31 L888 387.32 L888.5 388.5 L889 389.73 L889.5 389.27 L890 389.82 L890.5 390.45 L891 391.71 L891.5 393.81 L892 393.56 L892.5 394.13 L893 393.66 L893.5 395.93 L894 396.68 L894.5 396.08 L895 398.31 L895.5 399.58 L896 399.65 L896.5 399.95 L897 401.32 L897.5 403.87 L898 403.41 L898.5 402.46 L899 404.53 L899.5 403.37 L900 404.42 L900.5 404.41 L901 401.58 L901.5 403.15 L902 401.82 L902.5 400.01 L903 396.7 L903.5 396.2 L904 394.04 L904.5 393.44 L905 391.96 L905.5 391.31 L906 389.9 L906.5 387.28 L907 386.21 L907.5 385.71 L908 380.97 L908.5 376.68 L909 375.02 L909.5 373.78 L910 369.26 L910.5 366.89 L911 364.52 L911.5 360.38 L912 357.25 L912.5 356.06 L913 352.55 L913.5 350.16 L914 346.89 L914.5 342.47 L915 341.54 L915.5 337.69 L916 335.1 L916.5 333.15 L917 333.98 L917.5 331.96 L918 333.29 L918.5 331.2 L919 331.65 L919.5 331.1 L920 331.35 L920.5 331.39 L921 331.23 L921.5 329.89 L922 329.65 L922.5 321.8 L923 320.53 L923.5 327.32 L924 320.29 L924.5 322.79 L925 321.13 L925.5 318.26 L926 314.16 L926.5 313.78 L927 303.8 L927.5 333.81 L928 299.83 L928.5 294.86 L929 297.31 L929.5 292.2 L930 285.57 L930.5 283.49 L931 274.31 L931.5 277.79 L932 272.7 L932.5 274.24 L933 276.39 L933.5 277.64 L934 278.28 L934.5 275.51 L935 252.46 L935.5 258.88 L936 242.52 L936.5 252.72 L937 238.85 L937.5 245.42 L938 247.09 L938.5 255.87 L939 237.74 L939.5 223.44 L940 240.32 L940.5 228.78 L941 260.5 L941.5 250.28 L942 236.95 L942.5 237.83 L943 234.11 L943.5 240.42 L944 226.95 L944.5 267.27 L945 237.55 L945.5 226.09 L946 234.35 L946.5 220.54 L947 229.64 L947.5 230.6 L948 223.39 L948.5 228.6 L949 222.31 L949.5 226.51 L950 228.53 L950.5 225.71 L951 223.19 L951.5 224.5 L952 223.72 L952.5 222.54 L953 221.23 L953.5 219.05 L954 221.86 L954.5 220.34 L955 217.25 L955.5 217.27 L956 216.49 L956.5 216.42 L957 214.61 L957.5 213.86 L958 214.31 L958.5 213.92 L959 211.63 L959.5 211.84 L960 211.47 L960.5 211.48 L961 209.67 L961.5 209.71 L962 208.36 L962.5 206.38 L963 206.4 L963.5 203.82 L964 203.44 L964.5 202.93 L965 201.28 L965.5 199.21 L966 198.86 L966.5 198.64 L967 200.18 L967.5 201.27 L968 200.4 L968.5 201 L969 200.08 L969.5 200.85 L970 201.72 L970.5 202.87 L971 201.12 L971.5 203.09 L972 205.61 L972.5 207.21 L973 208.17 L973.5 208.57 L974 210.36 L974.5 210.41 L975 211.81 L975.5 212.91 L976 218.45 L976.5 217.41 L977 220.64 L977.5 223.89 L978 225.77 L978.5 228.2 L979 230.68 L979.5 231.78 L980 235.73 L980.5 238.39 L981 237.91 L981.5 244.39 L982 247.42 L982.5 251.6 L983 255.45 L983.5 258.18 L984 261.09 L984.5 266.14 L985 269.56 L985.5 273.67 L986 275.82 L986.5 272.71 L987 275.62 L987.5 275.6 L988 277.36 L988.5 279.85 L989 276.89 L989.5 271.51 L990 250.86 L990.5 288.16 L991 284.29 L991.5 292.33 L992 291.99 L992.5 291.87 L993 290.97 L993.5 306.05 L994 289.15 L994.5 289.7 L995 301.41 L995.5 286.64 L996 299.67 L996.5 301.8 L997 297.03 L997.5 308.13 L998 313.05 L998.5 305.63 L999 279.33 L999.5 325.43 L1000 316.55 L1000.5 333.87 L1001 327.39 L1001.5 349.45 L1002 352.26 L1002.5 345.76 L1003 354.93 L1003.5 369.61 L1004 381.41 L1004.5 369.29 L1005 362.95 L1005.5 367.65 L1006 377.69 L1006.5 368.8 L1007 364.13 L1007.5 366.11 L1008 345.49 L1008.5 362.3 L1009 382.52 L1009.5 369.93 L1010 373.47 L1010.5 361.18 L1011 368.61 L1011.5 361.31 L1012 365.62 L1012.5 361.78 L1013 365.11 L1013.5 377.11 L1014 375.45 L1014.5 377.28 L1015 373.22 L1015.5 389.65 L1016 378.65 L1016.5 390.32 L1017 379.23 L1017.5 374.64 L1018 388.39 L1018.5 378.45 L1019 385.09 L1019.5 379.76 L1020 387.16 L1020.5 378.85 L1021 378.61 L1021.5 388.2 L1022 387 L1022.5 387.61 L1023 386.78 L1023.5 387.25 L1024 389.97 L1024.5 389.86 L1025 388.8 L1025.5 391.26 L1026 390.02 L1026.5 392.48 L1027 391.17 L1027.5 394.79 L1028 396.51 L1028.5 396.79 L1029 394.18 L1029.5 397.6 L1030 398.07 L1030.5 398.97 L1031 399.89 L1031.5 399.77 L1032 400.56 L1032.5 402.06 L1033 402.73 L1033.5 401.66 L1034 402.79 L1034.5 403.34 L1035 403.47 L1035.5 405.26 L1036 404.58 L1036.5 403.87 L1037 404.99 L1037.5 401.54 L1038 403.99 L1038.5 402.14 L1039 400.41 L1039.5 398.64 L1040 397.31 L1040.5 395.54 L1041 392.95 L1041.5 393.17 L1042 391.51 L1042.5 391.12 L1043 390.11 L1043.5 386.7 L1044 384.32 L1044.5 379.78 L1045 377.61 L1045.5 376.57 L1046 371.14 L1046.5 370.1 L1047 366.38 L1047.5 364.08 L1048 360.94 L1048.5 357.78 L1049 355.43 L1049.5 352.05 L1050 348.67 L1050.5 344.76 L1051 341.84 L1051.5 337.85 L1052 338.26 L1052.5 334.89 L1053 332.97 L1053.5 334.93 L1054 333.65 L1054.5 332.44 L1055 331.3 L1055.5 331.91 L1056 331.82 L1056.5 331.96 L1057 330.85 L1057.5 331.02 L1058 330.45 L1058.5 331.34 L1059 333.67 L1059.5 330.24 L1060 327.41 L1060.5 328.84 L1061 322.84 L1061.5 315.45 L1062 316.17 L1062.5 311.08 L1063 287.5 L1063.5 307.63 L1064 313.76 L1064.5 305.21 L1065 301.58 L1065.5 297.59 L1066 297.53 L1066.5 292.54 L1067 255.53 L1067.5 289.2 L1068 269.89 L1068.5 299.94 L1069 270.3 L1069.5 264.65 L1070 271.12 L1070.5 249.83 L1071 250.39 L1071.5 249.52 L1072 267.84 L1072.5 254.35 L1073 260.61 L1073.5 247.1 L1074 247.14 L1074.5 253.93 L1075 241.7 L1075.5 250.14 L1076 249.84 L1076.5 242.69 L1077 233.95 L1077.5 236.55 L1078 240.76 L1078.5 236.66 L1079 238.04 L1079.5 240.97 L1080 238.97 L1080.5 234.11 L1081 233.44 L1081.5 236.57 L1082 258.47 L1082.5 230.28 L1083 228.55 L1083.5 229.29 L1084 227.99 L1084.5 225.17 L1085 228.08 L1085.5 242.81 L1086 230.53 L1086.5 225.33 L1087 224.35 L1087.5 224.81 L1088 222.07 L1088.5 222.17 L1089 220.72 L1089.5 220.67 L1090 218.83 L1090.5 218.21 L1091 217.96 L1091.5 216.72 L1092 217.78 L1092.5 214.4 L1093 217.75 L1093.5 214.79 L1094 213.92 L1094.5 214.71 L1095 213.62 L1095.5 214.22 L1096 212.37 L1096.5 210.54 L1097 210.92 L1097.5 210.45 L1098 207.8 L1098.5 207.14 L1099 206.13 L1099.5 204.25 L1100 204.29 L1100.5 200.8 L1101 199.62 L1101.5 200.77 L1102 201.77 L1102.5 201.67 L1103 202.11 L1103.5 203.17 L1104 203.44 L1104.5 202.82 L1105 204.49 L1105.5 204.64 L1106 204.86 L1106.5 205.79 L1107 205.46 L1107.5 208.43 L1108 207.82 L1108.5 209.52 L1109 211.73 L1109.5 212.4 L1110 213.66 L1110.5 216.58 L1111 217.76 L1111.5 220.06 L1112 222.43 L1112.5 225.05 L1113 227.2 L1113.5 229.39 L1114 230.39 L1114.5 234.76 L1115 236.78 L1115.5 240.5 L1116 241.58 L1116.5 246.64 L1117 250.52 L1117.5 254.22 L1118 257.53 L1118.5 261.53 L1119 264.59 L1119.5 266.68 L1120 271.89 L1120.5 275.42 L1121 277.23 L1121.5 276.33 L1122 277.95 L1122.5 278.48 L1123 278.37 L1123.5 276.22 L1124 287.02 L1124.5 284.14 L1125 294.31 L1125.5 278.87 L1126 295.18 L1126.5 290.45 L1127 291.56 L1127.5 284.36 L1128 293.67 L1128.5 291.46 L1129 303.98 L1129.5 311.89 L1130 297.33 L1130.5 306.44 L1131 309.89 L1131.5 303 L1132 299.84 L1132.5 296.13 L1133 302.93 L1133.5 336.07 L1134 326.01 L1134.5 297.05 L1135 324.57 L1135.5 337.46 L1136 339.69 L1136.5 345.86 L1137 353.58 L1137.5 357.71 L1138 361.94 L1138.5 377.88 L1139 362.84 L1139.5 364.17 L1140 361.86 L1140.5 379.56 L1141 370.82 L1141.5 345.78 L1142 371.95 L1142.5 374.27 L1143 371.02 L1143.5 360.26 L1144 369.9 L1144.5 363.74 L1145 358.87 L1145.5 372.88 L1146 350.87 L1146.5 374.19 L1147 373.72 L1147.5 381.07 L1148 369.45 L1148.5 381.68 L1149 374.35 L1149.5 374.54 L1150 380.3 L1150.5 389.97 L1151 378.39 L1151.5 374.51 L1152 381.45 L1152.5 382.03 L1153 385.55 L1153.5 387.36 L1154 387.52 L1154.5 383.07 L1155 385.14 L1155.5 387.76 L1156 391.41 L1156.5 387.15 L1157 387.08 L1157.5 390.19 L1158 388.8 L1158.5 389.02 L1159 390.1 L1159.5 389.8 L1160 390.75 L1160.5 393.4 L1161 393.27 L1161.5 393.91 L1162 396.07 L1162.5 395.92 L1163 395.5 L1163.5 396.87 L1164 397.98 L1164.5 396.32 L1165 398.95 L1165.5 399.41 L1166 401.91 L1166.5 400.7 L1167 403.04 L1167.5 403.56 L1168 404.56 L1168.5 405.84 L1169 404.46 L1169.5 406.56 L1170 404.98 L1170.5 405.91 L1171 402.63 L1171.5 402.22 L1172 400.12 L1172.5 400.99 L1173 398.09 L1173.5 396.63 L1174 395.77 L1174.5 394.84 L1175 393.99 L1175.5 395.23 L1176 390.35 L1176.5 390.74 L1177 389.22 L1177.5 385.28 L1178 385.23 L1178.5 380.51 L1179 376.2 L1179.5 373.9 L1180 371.21 L1180.5 368.82 L1181 364.98 L1181.5 363.7 L1182 359.84 L1182.5 355.61 L1183 354.32 L1183.5 350.65 L1184 347.95 L1184.5 345.87 L1185 343.63 L1185.5 339.65 L1186 336.63 L1186.5 335.51 L1187 334.24 L1187.5 333.55 L1188 332.91 L1188.5 332.83 L1189 333.95 L1189.5 331.17 L1190 331.82 L1190.5 331.12 L1191 332.71 L1191.5 330.11 L1192 328.62 L1192.5 326.8 L1193 326.34 L1193.5 329.77 L1194 322.82 L1194.5 318.35 L1195 319.81 L1195.5 313.63 L1196 314.09 L1196.5 306.4 L1197 308.18 L1197.5 315.64 L1198 298.67 L1198.5 297.9 L1199 304.5 L1199.5 292.83 L1200 288.34 L1200.5 304.77 L1201 298.02 L1201.5 285.99 L1202 292.01 L1202.5 281.01 L1203 272.33 L1203.5 278.81 L1204 270.97 L1204.5 258.29 L1205 257.42 L1205.5 256.64 L1206 251.05 L1206.5 244.58 L1207 248.01 L1207.5 259.61 L1208 244.77 L1208.5 214.94 L1209 243.6 L1209.5 264.53 L1210 246.49 L1210.5 238.12 L1211 235.51 L1211.5 231.58 L1212 242.1 L1212.5 247.66 L1213 242.83 L1213.5 232.38 L1214 242.91 L1214.5 225.33 L1215 222.27 L1215.5 223.2 L1216 227.98 L1216.5 233.8 L1217 227.42 L1217.5 226.06 L1218 214.92 L1218.5 220.66 L1219 223.38 L1219.5 224.33 L1220 221.11 L1220.5 225.26 L1221 223.41 L1221.5 222.66 L1222 222.27 L1222.5 221.37 L1223 221.26 L1223.5 218.42 L1224 218.26 L1224.5 218.76 L1225 217.13 L1225.5 218.69 L1226 217.75 L1226.5 216.98 L1227 215.64 L1227.5 215.81 L1228 215.79 L1228.5 215.77 L1229 214.8 L1229.5 212.13 L1230 211.45 L1230.5 212.17 L1231 207.87 L1231.5 209.03 L1232 207.89 L1232.5 206.48 L1233 205.16 L1233.5 204.45 L1234 203 L1234.5 201.09 L1235 199.84 L1235.5 201.48 L1236 201.38 L1236.5 202.35 L1237 202.44 L1237.5 202.52 L1238 203.13 L1238.5 202.64 L1239 204.52 L1239.5 203.65 L1240 203.71 L1240.5 205.13 L1241 205.98 L1241.5 206.56 L1242 209 L1242.5 210.45 L1243 211.42 L1243.5 215.51 L1244 213.92 L1244.5 215.85 L1245 217.01 L1245.5 220.62 L1246 222.27 L1246.5 224.02 L1247 226.49 L1247.5 230.18 L1248 232.63 L1248.5 233.29 L1249 237.09 L1249.5 238.73 L1250 244.01 L1250.5 245.87 L1251 250.39 L1251.5 253.92 L1252 255.78 L1252.5 261.6 L1253 265.07 L1253.5 268.4 L1254 271.53 L1254.5 274.28 L1255 274.66 L1255.5 274.62 L1256 276.12 L1256.5 275.62 L1257 277.06 L1257.5 279.15 L1258 280.11 L1258.5 276.88 L1259 280.15 L1259.5 286.43 L1260 289.08 L1260.5 290.93 L1261 284.7 L1261.5 281.49 L1262 291.93 L1262.5 295.64 L1263 302.44 L1263.5 301.18 L1264 303.15 L1264.5 293.82 L1265 304.94 L1265.5 311.92 L1266 301.2 L1266.5 303.95 L1267 319.03 L1267.5 306.12 L1268 316.77 L1268.5 321.93 L1269 314.54 L1269.5 322.76 L1270 343.62 L1270.5 342.62 L1271 340.44 L1271.5 349.42 L1272 397.44 L1272.5 358.29 L1273 366.18 L1273.5 380.39 L1274 362.77 L1274.5 362.9 L1275 363.88 L1275.5 364.94 L1276 374.1 L1276.5 399.84 L1277 368.28 L1277.5 366.32" fill="none" stroke="#3a52a5" stroke-width="1.0" stroke-linejoin="round" shape-rendering="crispEdges"/>
<rect x="69" y="177" width="1272" height="3" fill="#5c5c5c"/>
<rect x="69" y="177" width="3" height="261" fill="#5c5c5c"/>
<path d="M69 438 L72 435 L1338 435 L1338 180 L1341 177 L1341 438Z" fill="#e3e3e3"/>
<rect x="64" y="202" width="5" height="1" fill="#a9a9a9"/>
<rect x="64" y="236" width="5" height="1" fill="#a9a9a9"/>
<rect x="64" y="271" width="5" height="1" fill="#a9a9a9"/>
<rect x="64" y="306" width="5" height="1" fill="#a9a9a9"/>
<rect x="64" y="341" width="5" height="1" fill="#a9a9a9"/>
<rect x="64" y="376" width="5" height="1" fill="#a9a9a9"/>
<rect x="64" y="411" width="5" height="1" fill="#a9a9a9"/>
<rect x="1341" y="186" width="5" height="1" fill="#a9a9a9"/>
<rect x="1341" y="225" width="5" height="1" fill="#a9a9a9"/>
<rect x="1341" y="264" width="5" height="1" fill="#a9a9a9"/>
<rect x="1341" y="304" width="5" height="1" fill="#a9a9a9"/>
<rect x="1341" y="343" width="5" height="1" fill="#a9a9a9"/>
<rect x="1341" y="382" width="5" height="1" fill="#a9a9a9"/>
<rect x="1341" y="421" width="5" height="1" fill="#a9a9a9"/>
<rect x="231" y="438" width="1" height="9" fill="#a9a9a9"/>
<rect x="392" y="438" width="1" height="9" fill="#a9a9a9"/>
<rect x="553" y="438" width="1" height="9" fill="#a9a9a9"/>
<rect x="714" y="438" width="1" height="9" fill="#a9a9a9"/>
<rect x="875" y="438" width="1" height="9" fill="#a9a9a9"/>
<rect x="1036" y="438" width="1" height="9" fill="#a9a9a9"/>
<rect x="1197" y="438" width="1" height="9" fill="#a9a9a9"/>
<rect x="71" y="438" width="1" height="9" fill="#a9a9a9"/>
<text x="60.5" y="207" font-family="'Liberation Sans', sans-serif" font-size="15" text-anchor="end" letter-spacing="-0.4">600</text>
<text x="60.5" y="241.83" font-family="'Liberation Sans', sans-serif" font-size="15" text-anchor="end" letter-spacing="-0.4">400</text>
<text x="60.5" y="276.67" font-family="'Liberation Sans', sans-serif" font-size="15" text-anchor="end" letter-spacing="-0.4">200</text>
<text x="60.5" y="311.5" font-family="'Liberation Sans', sans-serif" font-size="15" text-anchor="end" letter-spacing="-0.4">0</text>
<text x="60.5" y="346.33" font-family="'Liberation Sans', sans-serif" font-size="15" text-anchor="end" letter-spacing="-0.4">-200</text>
<text x="60.5" y="381.17" font-family="'Liberation Sans', sans-serif" font-size="15" text-anchor="end" letter-spacing="-0.4">-400</text>
<text x="60.5" y="416" font-family="'Liberation Sans', sans-serif" font-size="15" text-anchor="end" letter-spacing="-0.4">-600</text>
<text x="1348.5" y="191.7" font-family="'Liberation Sans', sans-serif" font-size="15" text-anchor="start" letter-spacing="-0.4">6</text>
<text x="1348.5" y="230.8" font-family="'Liberation Sans', sans-serif" font-size="15" text-anchor="start" letter-spacing="-0.4">4</text>
<text x="1348.5" y="269.9" font-family="'Liberation Sans', sans-serif" font-size="15" text-anchor="start" letter-spacing="-0.4">2</text>
<text x="1348.5" y="309" font-family="'Liberation Sans', sans-serif" font-size="15" text-anchor="start" letter-spacing="-0.4">0</text>
<text x="1348.5" y="348.1" font-family="'Liberation Sans', sans-serif" font-size="15" text-anchor="start" letter-spacing="-0.4">-2</text>
<text x="1348.5" y="387.2" font-family="'Liberation Sans', sans-serif" font-size="15" text-anchor="start" letter-spacing="-0.4">-4</text>
<text x="1348.5" y="426.3" font-family="'Liberation Sans', sans-serif" font-size="15" text-anchor="start" letter-spacing="-0.4">-6</text>
<text x="71.5" y="460" font-family="'Liberation Sans', sans-serif" font-size="15" text-anchor="middle" letter-spacing="-0.4">0</text>
<text x="232.42" y="460" font-family="'Liberation Sans', sans-serif" font-size="15" text-anchor="middle" letter-spacing="-0.4">20</text>
<text x="393.34" y="460" font-family="'Liberation Sans', sans-serif" font-size="15" text-anchor="middle" letter-spacing="-0.4">40</text>
<text x="554.26" y="460" font-family="'Liberation Sans', sans-serif" font-size="15" text-anchor="middle" letter-spacing="-0.4">60</text>
<text x="715.18" y="460" font-family="'Liberation Sans', sans-serif" font-size="15" text-anchor="middle" letter-spacing="-0.4">80</text>
<text x="876.1" y="460" font-family="'Liberation Sans', sans-serif" font-size="15" text-anchor="middle" letter-spacing="-0.4">100</text>
<text x="1037.02" y="460" font-family="'Liberation Sans', sans-serif" font-size="15" text-anchor="middle" letter-spacing="-0.4">120</text>
<text x="1197.94" y="460" font-family="'Liberation Sans', sans-serif" font-size="15" text-anchor="middle" letter-spacing="-0.4">140</text>
<text x="703.5" y="477" font-family="'Liberation Sans', sans-serif" font-size="14" text-anchor="middle" >Milliseconds</text>
<text x="0" y="0" font-family="'Liberation Sans', sans-serif" font-size="15" text-anchor="middle" transform="translate(26.5 306.5) rotate(-90)">Ch1 V</text>
<text x="0" y="0" font-family="'Liberation Sans', sans-serif" font-size="15" text-anchor="middle" transform="translate(1365.5 306.5) rotate(90)">Ch1 A</text>
<text x="696.5" y="572" font-family="'Liberation Serif', serif" font-size="21" text-anchor="middle" >Voltage and Current RMS Capture</text>
<text x="695.5" y="591" font-family="'Liberation Serif', serif" font-size="14" text-anchor="middle" >Waveform Capture #4, Mar 21 2012, 05:58:55,&#160; Cycle 11</text>
<rect x="368" y="610" width="37" height="2" fill="#000"/>
<rect x="404" y="604" width="2" height="8" fill="#000"/>
<rect x="367" y="603" width="36" height="6" fill="#ed1c24"/>
<text x="363" y="627" font-family="'Liberation Sans', sans-serif" font-size="13" text-anchor="start" >Voltage</text>
<rect x="1006" y="610" width="37" height="2" fill="#000"/>
<rect x="1042" y="604" width="2" height="8" fill="#000"/>
<rect x="1005" y="603" width="36" height="6" fill="#3a52a5"/>
<text x="1002.5" y="627" font-family="'Liberation Sans', sans-serif" font-size="13" text-anchor="start" letter-spacing="-0.4">Current</text>
<text x="15" y="950" font-family="'Liberation Serif', serif" font-size="14" text-anchor="start" >Turbo Cam&#160;&#160;&#160;&#160; OMega 50</text>
<text x="15" y="966" font-family="'Liberation Serif', serif" font-size="14" text-anchor="start" >Transformer primary&#160;&#160;&#160;&#160; (90 KVA)</text>
<rect x="67" y="634" width="1276" height="258" fill="#ffffff"/>
<rect x="67" y="689" width="1276" height="64" fill="#fafafa"/>
<rect x="67" y="816" width="1276" height="64" fill="#fafafa"/>
<rect x="228" y="634" width="1" height="258" fill="#e8e8e8"/>
<rect x="390" y="634" width="1" height="258" fill="#e8e8e8"/>
<rect x="552" y="634" width="1" height="258" fill="#e8e8e8"/>
<rect x="715" y="634" width="1" height="258" fill="#e8e8e8"/>
<rect x="877" y="634" width="1" height="258" fill="#e8e8e8"/>
<rect x="1039" y="634" width="1" height="258" fill="#e8e8e8"/>
<rect x="1201" y="634" width="1" height="258" fill="#e8e8e8"/>
<rect x="67" y="689" width="1276" height="1" fill="#e8e8e8"/>
<rect x="67" y="752" width="1276" height="1" fill="#e8e8e8"/>
<rect x="67" y="816" width="1276" height="1" fill="#e8e8e8"/>
<rect x="67" y="880" width="1276" height="1" fill="#e8e8e8"/>
<rect x="67" y="867" width="7" height="1" fill="#8f8f8f"/>
<rect x="67" y="854" width="7" height="1" fill="#8f8f8f"/>
<rect x="67" y="841" width="7" height="1" fill="#8f8f8f"/>
<rect x="67" y="829" width="7" height="1" fill="#8f8f8f"/>
<rect x="67" y="803" width="7" height="1" fill="#8f8f8f"/>
<rect x="67" y="791" width="7" height="1" fill="#8f8f8f"/>
<rect x="67" y="778" width="7" height="1" fill="#8f8f8f"/>
<rect x="67" y="765" width="7" height="1" fill="#8f8f8f"/>
<rect x="67" y="740" width="7" height="1" fill="#8f8f8f"/>
<rect x="67" y="727" width="7" height="1" fill="#8f8f8f"/>
<rect x="67" y="714" width="7" height="1" fill="#8f8f8f"/>
<rect x="67" y="701" width="7" height="1" fill="#8f8f8f"/>
<rect x="67" y="676" width="7" height="1" fill="#8f8f8f"/>
<rect x="67" y="663" width="7" height="1" fill="#8f8f8f"/>
<rect x="67" y="651" width="7" height="1" fill="#8f8f8f"/>
<rect x="67" y="638" width="7" height="1" fill="#8f8f8f"/>
<rect x="106" y="883" width="1" height="9" fill="#8f8f8f"/>
<rect x="147" y="883" width="1" height="9" fill="#8f8f8f"/>
<rect x="188" y="883" width="1" height="9" fill="#8f8f8f"/>
<rect x="269" y="883" width="1" height="9" fill="#8f8f8f"/>
<rect x="309" y="883" width="1" height="9" fill="#8f8f8f"/>
<rect x="350" y="883" width="1" height="9" fill="#8f8f8f"/>
<rect x="431" y="883" width="1" height="9" fill="#8f8f8f"/>
<rect x="471" y="883" width="1" height="9" fill="#8f8f8f"/>
<rect x="512" y="883" width="1" height="9" fill="#8f8f8f"/>
<rect x="593" y="883" width="1" height="9" fill="#8f8f8f"/>
<rect x="633" y="883" width="1" height="9" fill="#8f8f8f"/>
<rect x="674" y="883" width="1" height="9" fill="#8f8f8f"/>
<rect x="755" y="883" width="1" height="9" fill="#8f8f8f"/>
<rect x="796" y="883" width="1" height="9" fill="#8f8f8f"/>
<rect x="836" y="883" width="1" height="9" fill="#8f8f8f"/>
<rect x="917" y="883" width="1" height="9" fill="#8f8f8f"/>
<rect x="958" y="883" width="1" height="9" fill="#8f8f8f"/>
<rect x="998" y="883" width="1" height="9" fill="#8f8f8f"/>
<rect x="1079" y="883" width="1" height="9" fill="#8f8f8f"/>
<rect x="1120" y="883" width="1" height="9" fill="#8f8f8f"/>
<rect x="1160" y="883" width="1" height="9" fill="#8f8f8f"/>
<rect x="1242" y="883" width="1" height="9" fill="#8f8f8f"/>
<rect x="1282" y="883" width="1" height="9" fill="#8f8f8f"/>
<rect x="1323" y="883" width="1" height="9" fill="#8f8f8f"/>
<rect x="1337" y="883" width="6" height="1" fill="#8f8f8f"/>
<rect x="1337" y="877" width="6" height="1" fill="#8f8f8f"/>
<rect x="1336" y="870" width="7" height="1" fill="#8f8f8f"/>
<rect x="1337" y="864" width="6" height="1" fill="#8f8f8f"/>
<rect x="1337" y="857" width="6" height="1" fill="#8f8f8f"/>
<rect x="1337" y="851" width="6" height="1" fill="#8f8f8f"/>
<rect x="1337" y="844" width="6" height="1" fill="#8f8f8f"/>
<rect x="1336" y="838" width="7" height="1" fill="#8f8f8f"/>
<rect x="1337" y="832" width="6" height="1" fill="#8f8f8f"/>
<rect x="1337" y="825" width="6" height="1" fill="#8f8f8f"/>
<rect x="1337" y="819" width="6" height="1" fill="#8f8f8f"/>
<rect x="1337" y="812" width="6" height="1" fill="#8f8f8f"/>
<rect x="1336" y="806" width="7" height="1" fill="#8f8f8f"/>
<rect x="1337" y="799" width="6" height="1" fill="#8f8f8f"/>
<rect x="1337" y="793" width="6" height="1" fill="#8f8f8f"/>
<rect x="1337" y="786" width="6" height="1" fill="#8f8f8f"/>
<rect x="1337" y="780" width="6" height="1" fill="#8f8f8f"/>
<rect x="1336" y="773" width="7" height="1" fill="#8f8f8f"/>
<rect x="1337" y="767" width="6" height="1" fill="#8f8f8f"/>
<rect x="1337" y="760" width="6" height="1" fill="#8f8f8f"/>
<rect x="1337" y="754" width="6" height="1" fill="#8f8f8f"/>
<rect x="1337" y="747" width="6" height="1" fill="#8f8f8f"/>
<rect x="1336" y="741" width="7" height="1" fill="#8f8f8f"/>
<rect x="1337" y="734" width="6" height="1" fill="#8f8f8f"/>
<rect x="1337" y="728" width="6" height="1" fill="#8f8f8f"/>
<rect x="1337" y="721" width="6" height="1" fill="#8f8f8f"/>
<rect x="1337" y="715" width="6" height="1" fill="#8f8f8f"/>
<rect x="1336" y="708" width="7" height="1" fill="#8f8f8f"/>
<rect x="1337" y="702" width="6" height="1" fill="#8f8f8f"/>
<rect x="1337" y="695" width="6" height="1" fill="#8f8f8f"/>
<rect x="1337" y="689" width="6" height="1" fill="#8f8f8f"/>
<rect x="1337" y="682" width="6" height="1" fill="#8f8f8f"/>
<rect x="1336" y="676" width="7" height="1" fill="#8f8f8f"/>
<rect x="1337" y="670" width="6" height="1" fill="#8f8f8f"/>
<rect x="1337" y="663" width="6" height="1" fill="#8f8f8f"/>
<rect x="1337" y="657" width="6" height="1" fill="#8f8f8f"/>
<rect x="1337" y="650" width="6" height="1" fill="#8f8f8f"/>
<rect x="1336" y="644" width="7" height="1" fill="#8f8f8f"/>
<rect x="1337" y="637" width="6" height="1" fill="#8f8f8f"/>
<path d="M200.8 677.3 L214 677.3 L217 676.3 L220 677.3 L262 676.8 L280 676.3 L290 677 L313.6 676.2 L316 675 L322 676.2 L329 675 L338 676 L378 676 L380.5 675.3 L384 676 L390.8 677.2 L403.7 676.6 L414 677.3 L421.7 680 L430.7 684.3 L439.7 685 L445 686.3 L448.2 689 L452.6 696.6 L460.3 713.4 L466.8 732.7 L473.2 753.3 L478.4 763.6 L483.5 768.7 L488.7 773.9 L493.8 777 L504.3 777.6 L518.5 789.5 L528 814.4 L537.5 850 L547 867.8 L557.7 875 L568.4 872.1 L575.5 873.8 L585 879.7 L594.5 879.7 L604 878 L611.1 869.7 L620.6 866.2 L631.3 856 L642 854.8 L653.9 859 L661 853.6 L680 818 L687.1 812 L699 798.2 L710.9 799 L719.2 801.3 L729.9 796.6 L737 785.9 L751.3 747.9 L760.8 736 L772.7 734.3 L784.5 737.2 L798.9 731.8 L807.9 717.2 L826.9 696 L843.7 696 L854.9 696 L866 693.1 L875 687 L879.5 685.2 L887.3 684.8 L894 682.6 L915.3 683.7 L925.3 682.1 L929.8 679.2 L939.9 678.1 L949.9 674.7 L957.7 674.7 L973.4 676.3 L985.7 674.7 L993.5 670.3 L1009.2 666.9 L1020.4 663.5 L1029.3 665.1 L1053.9 664.2 L1059.5 660.2 L1067.3 659.7 L1080.8 654.2 L1090 653.5 L1099.1 652.4 L1103.6 653.5 L1118.8 653.2 L1123.3 651.5 L1130.9 651.2 L1137 648.5 L1149.1 648.5 L1152.1 649.4 L1161.2 647.4 L1168.8 649.2 L1182.4 649.2 L1188.5 647.4 L1197.6 647.1 L1206.7 644.4 L1214.2 644.4 L1220.3 647.4 L1227.9 646.2 L1237.7 649.2 L1252.1 647.7 L1262.7 647.4 L1273.3 646.2 L1281.7 646.2" fill="none" stroke="#f0141e" stroke-width="1.0" stroke-linejoin="round" shape-rendering="crispEdges"/>
<path d="M200.8 756.4 L421.7 756.4 L423 757.5 L463 757.5 L468 759 L480 761 L490 764 L510.2 770 L532.8 770.5 L539.9 772.1 L566 774 L580.3 775.4 L596.9 775.4 L608.8 771.2 L637.3 767.4 L651.5 765 L670.5 764.5 L675.3 762.1 L713.3 757.4 L748.9 755 L779.8 751.4 L805.7 751.9 L825.8 750.8 L852.6 751.4 L888.4 749.7 L917.5 750.3 L984.6 749.7 L1015.9 751.4 L1029.3 752.3 L1100 751.4 L1161.2 751.2 L1162 750.5 L1184.7 750.5 L1185.5 751.2 L1214.2 751.2 L1215 750.5 L1281.7 750.5" fill="none" stroke="#3a52a5" stroke-width="1.0" stroke-linejoin="round" shape-rendering="crispEdges"/>
<rect x="64" y="631" width="1282" height="3" fill="#5c5c5c"/>
<rect x="64" y="631" width="3" height="264" fill="#5c5c5c"/>
<path d="M64 895 L67 892 L1343 892 L1343 634 L1346 631 L1346 895Z" fill="#e3e3e3"/>
<rect x="59" y="689" width="5" height="1" fill="#a9a9a9"/>
<rect x="59" y="752" width="5" height="1" fill="#a9a9a9"/>
<rect x="59" y="816" width="5" height="1" fill="#a9a9a9"/>
<rect x="59" y="880" width="5" height="1" fill="#a9a9a9"/>
<rect x="1346" y="644" width="5" height="1" fill="#a9a9a9"/>
<rect x="1346" y="676" width="5" height="1" fill="#a9a9a9"/>
<rect x="1346" y="708" width="5" height="1" fill="#a9a9a9"/>
<rect x="1346" y="741" width="5" height="1" fill="#a9a9a9"/>
<rect x="1346" y="773" width="5" height="1" fill="#a9a9a9"/>
<rect x="1346" y="806" width="5" height="1" fill="#a9a9a9"/>
<rect x="1346" y="838" width="5" height="1" fill="#a9a9a9"/>
<rect x="1346" y="870" width="5" height="1" fill="#a9a9a9"/>
<rect x="228" y="895" width="1" height="9" fill="#a9a9a9"/>
<rect x="390" y="895" width="1" height="9" fill="#a9a9a9"/>
<rect x="552" y="895" width="1" height="9" fill="#a9a9a9"/>
<rect x="715" y="895" width="1" height="9" fill="#a9a9a9"/>
<rect x="877" y="895" width="1" height="9" fill="#a9a9a9"/>
<rect x="1039" y="895" width="1" height="9" fill="#a9a9a9"/>
<rect x="1201" y="895" width="1" height="9" fill="#a9a9a9"/>
<rect x="66" y="895" width="1" height="9" fill="#a9a9a9"/>
<text x="56" y="694.2" font-family="'Liberation Sans', sans-serif" font-size="15" text-anchor="end" letter-spacing="-0.4">475</text>
<text x="56" y="757.85" font-family="'Liberation Sans', sans-serif" font-size="15" text-anchor="end" letter-spacing="-0.4">470</text>
<text x="56" y="821.5" font-family="'Liberation Sans', sans-serif" font-size="15" text-anchor="end" letter-spacing="-0.4">465</text>
<text x="56" y="885.15" font-family="'Liberation Sans', sans-serif" font-size="15" text-anchor="end" letter-spacing="-0.4">460</text>
<text x="1353" y="649.1" font-family="'Liberation Sans', sans-serif" font-size="15" text-anchor="start" letter-spacing="-0.4">7</text>
<text x="1353" y="681.5" font-family="'Liberation Sans', sans-serif" font-size="15" text-anchor="start" letter-spacing="-0.4">6</text>
<text x="1353" y="713.9" font-family="'Liberation Sans', sans-serif" font-size="15" text-anchor="start" letter-spacing="-0.4">5</text>
<text x="1353" y="746.3" font-family="'Liberation Sans', sans-serif" font-size="15" text-anchor="start" letter-spacing="-0.4">4</text>
<text x="1353" y="778.7" font-family="'Liberation Sans', sans-serif" font-size="15" text-anchor="start" letter-spacing="-0.4">3</text>
<text x="1353" y="811.1" font-family="'Liberation Sans', sans-serif" font-size="15" text-anchor="start" letter-spacing="-0.4">2</text>
<text x="1353" y="843.5" font-family="'Liberation Sans', sans-serif" font-size="15" text-anchor="start" letter-spacing="-0.4">1</text>
<text x="1353" y="875.9" font-family="'Liberation Sans', sans-serif" font-size="15" text-anchor="start" letter-spacing="-0.4">0</text>
<text x="66.9" y="917" font-family="'Liberation Sans', sans-serif" font-size="15" text-anchor="middle" letter-spacing="-0.4">0</text>
<text x="229.06" y="917" font-family="'Liberation Sans', sans-serif" font-size="15" text-anchor="middle" letter-spacing="-0.4">20</text>
<text x="391.22" y="917" font-family="'Liberation Sans', sans-serif" font-size="15" text-anchor="middle" letter-spacing="-0.4">40</text>
<text x="553.38" y="917" font-family="'Liberation Sans', sans-serif" font-size="15" text-anchor="middle" letter-spacing="-0.4">60</text>
<text x="715.54" y="917" font-family="'Liberation Sans', sans-serif" font-size="15" text-anchor="middle" letter-spacing="-0.4">80</text>
<text x="877.7" y="917" font-family="'Liberation Sans', sans-serif" font-size="15" text-anchor="middle" letter-spacing="-0.4">100</text>
<text x="1039.86" y="917" font-family="'Liberation Sans', sans-serif" font-size="15" text-anchor="middle" letter-spacing="-0.4">120</text>
<text x="1202.02" y="917" font-family="'Liberation Sans', sans-serif" font-size="15" text-anchor="middle" letter-spacing="-0.4">140</text>
<text x="703.5" y="934" font-family="'Liberation Sans', sans-serif" font-size="14" text-anchor="middle" >Milliseconds</text>
<text x="0" y="0" font-family="'Liberation Sans', sans-serif" font-size="15" text-anchor="middle" transform="translate(26.5 762.5) rotate(-90)">Ch1 V</text>
<text x="0" y="0" font-family="'Liberation Sans', sans-serif" font-size="15" text-anchor="middle" transform="translate(1365.5 762.5) rotate(90)">Ch1 A</text>
</svg></body></html>
